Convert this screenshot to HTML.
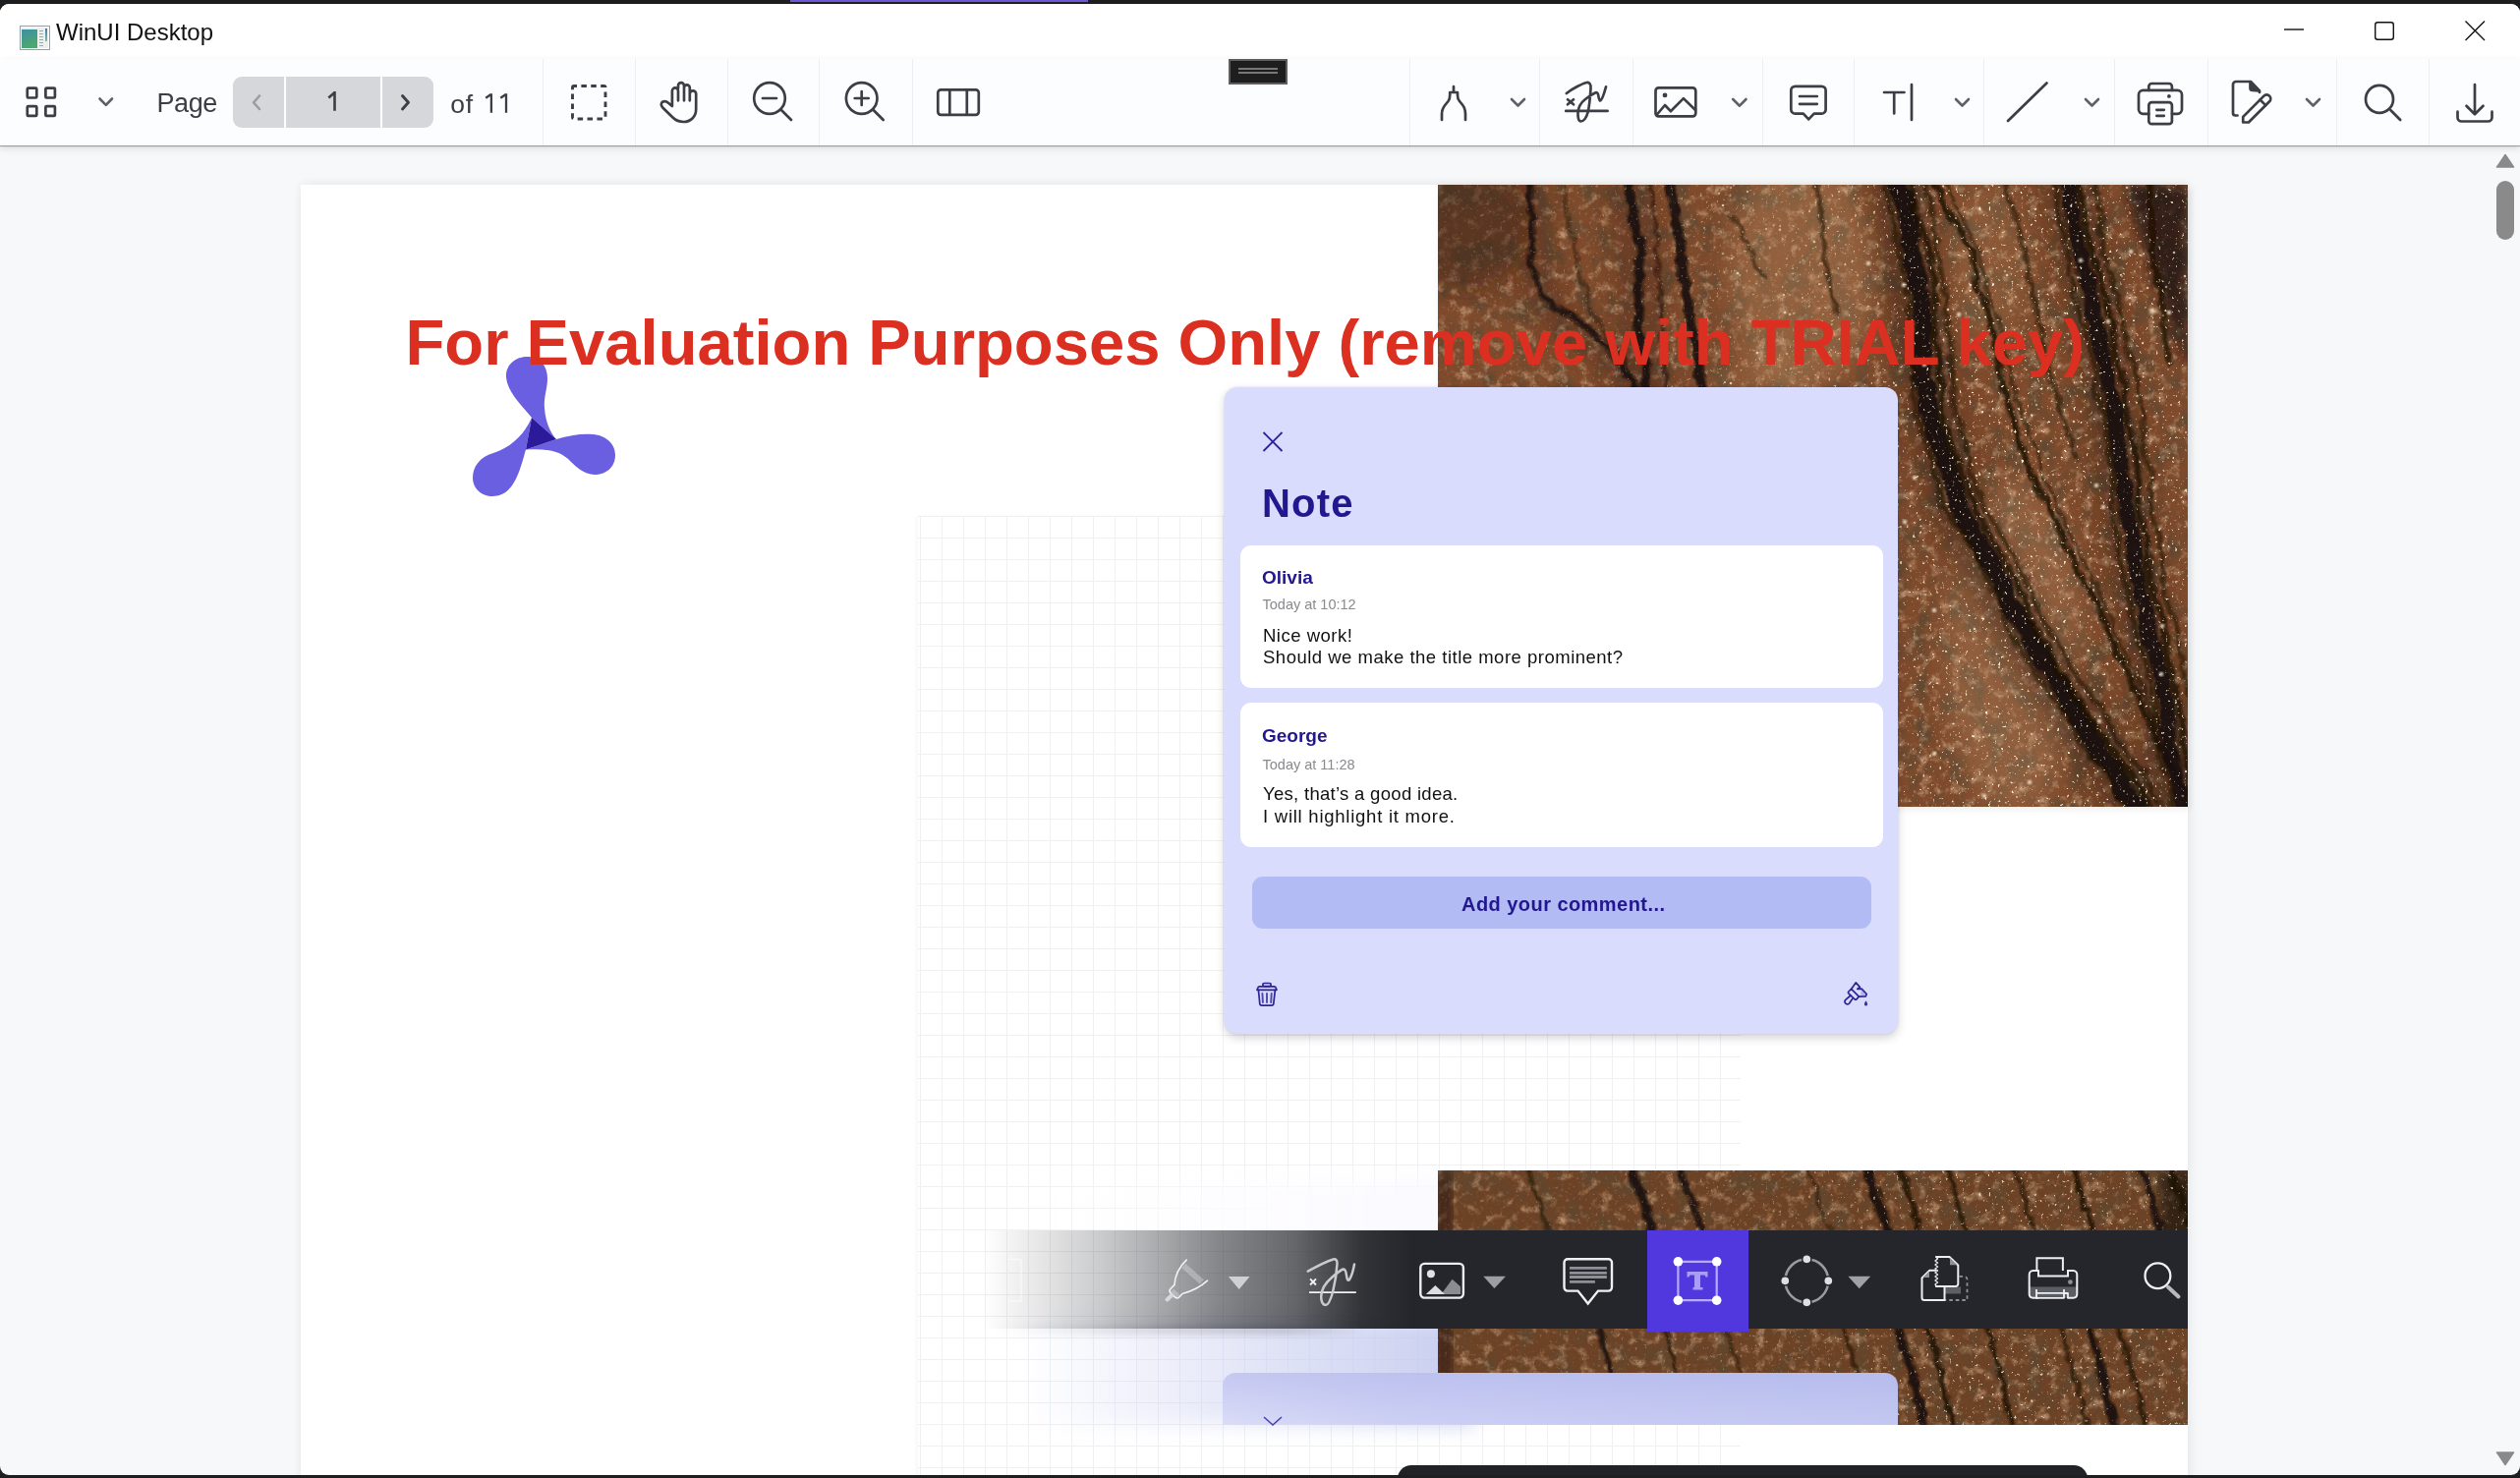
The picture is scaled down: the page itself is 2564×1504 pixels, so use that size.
<!DOCTYPE html>
<html><head><meta charset="utf-8">
<style>
*{box-sizing:border-box;margin:0;padding:0}
html,body{width:2564px;height:1504px;overflow:hidden;background:#1d1e20;font-family:"Liberation Sans",sans-serif;position:relative}
.a{position:absolute}
.t{position:absolute;white-space:nowrap;line-height:1}
#win{position:absolute;left:0;top:4px;width:2564px;height:1497px;border-radius:9px;background:#f7f8fa;overflow:hidden}
#clip{position:absolute;left:0;top:0;width:2564px;height:1501px;overflow:hidden;border-radius:0 0 9px 9px}
#title{position:absolute;left:0;top:4px;width:2564px;height:56px;background:#fff;border-radius:9px 9px 0 0}
#tb{position:absolute;left:0;top:60px;width:2564px;height:88px;background:#fcfdfe;box-shadow:0 1px 1px rgba(0,0,0,.3),0 3px 7px rgba(0,0,0,.12);z-index:5}
.sep{position:absolute;top:0;width:1px;height:88px;background:#eceef1}
svg.ic{position:absolute;overflow:visible}
#page{position:absolute;left:306px;top:188px;width:1920px;height:1400px;background:#fff;box-shadow:0 0 10px rgba(0,0,0,.05),3px 0 14px rgba(0,0,0,.04)}

.rock{background-color:#7a4e33;background-image:linear-gradient(100deg,rgba(30,15,8,.0) 0%,rgba(30,15,8,.35) 20%,rgba(30,15,8,0) 30%,rgba(30,15,8,.4) 45%,rgba(30,15,8,0) 55%,rgba(30,15,8,.45) 75%,rgba(30,15,8,0) 85%,rgba(30,15,8,.5) 97%)}
</style></head>
<body>
<div id="win"></div>
<div class="a" style="left:804px;top:0;width:303px;height:2px;background:#6b59d6"></div>
<div id="clip">
  <div id="page"></div>
  <!-- grid -->
  <div class="a" style="left:934px;top:525px;width:837px;height:980px;background-color:#fff;background-image:linear-gradient(90deg,#eef0f3 1.5px,transparent 1.5px),linear-gradient(#eef0f3 1.5px,transparent 1.5px);background-size:22px 22px;background-position:24px 22px;box-shadow:-2px 0 3px rgba(0,0,0,.03)"></div>
  <!-- image 1 -->
  <svg class="ic" style="left:1463px;top:188px;overflow:hidden;box-shadow:2px 2px 8px rgba(0,0,0,.08)" width="763" height="633" viewBox="0 0 763 633"><defs>
<filter id="tex" x="0" y="0" width="100%" height="100%"><feTurbulence type="fractalNoise" baseFrequency="0.05 0.035" numOctaves="4" seed="5"/><feColorMatrix type="matrix" values="0 0 0 0 0.14  0 0 0 0 0.08  0 0 0 0 0.04  3.2 0 0 0 -1.45"/></filter>
<filter id="tex2" x="0" y="0" width="100%" height="100%"><feTurbulence type="fractalNoise" baseFrequency="0.09" numOctaves="3" seed="11"/><feColorMatrix type="matrix" values="0 0 0 0 0.80  0 0 0 0 0.50  0 0 0 0 0.30  2.3 0 0 0 -1.2"/></filter>
<filter id="tex3" x="0" y="0" width="100%" height="100%"><feTurbulence type="fractalNoise" baseFrequency="0.35" numOctaves="2" seed="2"/><feColorMatrix type="matrix" values="0 0 0 0 0.18  0 0 0 0 0.09  0 0 0 0 0.03  2.2 0 0 0 -1.0"/></filter>
<filter id="rough" x="-5%" y="-5%" width="110%" height="110%"><feTurbulence type="fractalNoise" baseFrequency="0.08" numOctaves="2" seed="4" result="t"/><feDisplacementMap in="SourceGraphic" in2="t" scale="9" xChannelSelector="R" yChannelSelector="G"/></filter>
<filter id="spk" x="0" y="0" width="100%" height="100%"><feTurbulence type="fractalNoise" baseFrequency="0.3" numOctaves="2" seed="9"/><feColorMatrix type="matrix" values="0 0 0 0 0.97  0 0 0 0 0.88  0 0 0 0 0.66  8 0 0 0 -5.4"/><feGaussianBlur stdDeviation="0.5"/></filter>
<linearGradient id="spkg" x1="0" y1="0" x2="1" y2="0"><stop offset="0" stop-color="#fff" stop-opacity=".15"/><stop offset=".45" stop-color="#fff" stop-opacity=".5"/><stop offset=".7" stop-color="#fff" stop-opacity="1"/><stop offset="1" stop-color="#fff" stop-opacity=".8"/></linearGradient>
<mask id="spkm"><rect width="800" height="700" fill="url(#spkg)"/></mask>
<filter id="b1" x="-20%" y="-5%" width="140%" height="110%"><feGaussianBlur stdDeviation="1"/></filter>
<filter id="b4"><feGaussianBlur stdDeviation="6"/></filter>
<filter id="b8"><feGaussianBlur stdDeviation="12"/></filter>
<linearGradient id="sh1" x1="0" y1="0" x2="1" y2="0"><stop offset="0" stop-color="#000" stop-opacity=".08"/><stop offset=".6" stop-color="#fff" stop-opacity=".04"/><stop offset="1" stop-color="#000" stop-opacity=".15"/></linearGradient>
</defs><rect width="763" height="633" fill="#8e5232"/><rect width="763" height="633" filter="url(#tex)"/><rect width="763" height="633" filter="url(#tex2)"/><rect width="763" height="633" filter="url(#tex3)"/><rect width="763" height="633" fill="#3a1e0c" opacity=".14"/><g filter="url(#b8)"><ellipse cx="370" cy="90" rx="75" ry="120" fill="#c89a70" opacity=".28"/><ellipse cx="330" cy="230" rx="50" ry="60" fill="#c89a70" opacity=".18"/><ellipse cx="585" cy="470" rx="70" ry="170" fill="#d0a880" opacity=".22"/><ellipse cx="560" cy="80" rx="40" ry="80" fill="#c89a70" opacity=".18"/></g><g filter="url(#b8)" opacity=".55"><path d="M95 0 C97.5 19.7 94.3 86.5 110 118 C125.7 149.5 165.7 160.3 189 189 C212.3 217.7 239.8 273.2 250 290" stroke="#3a2216" stroke-width="30.0" stroke-opacity="0.6" fill="none" stroke-linecap="round"/><path d="M194 0 C195.8 15.7 201.8 59.8 205 94 C208.2 128.2 205.5 167.3 213 205 C220.5 242.7 243.8 300.8 250 320" stroke="#3a2216" stroke-width="40.0" stroke-opacity="0.6" fill="none" stroke-linecap="round"/><path d="M468 0 C472.3 28.8 483.7 118.0 494 173 C504.3 228.0 511.5 280.5 530 330 C548.5 379.5 574.7 419.5 605 470 C635.3 520.5 694.2 605.8 712 633" stroke="#2a180e" stroke-width="50.0" stroke-opacity="0.8" fill="none" stroke-linecap="round"/><path d="M640 0 C646.2 28.8 664.8 103.7 677 173 C689.2 242.3 699.7 339.3 713 416 C726.3 492.7 749.7 596.8 757 633" stroke="#2a180e" stroke-width="45.0" stroke-opacity="0.8" fill="none" stroke-linecap="round"/></g><g filter="url(#rough)"><ellipse cx="30" cy="40" rx="60" ry="70" fill="#3a2418" opacity=".5" filter="url(#b8)"/><path d="M700 0 L763 0 L763 190 C745 140 720 80 700 0 Z" fill="#1a0f0a" opacity=".75" filter="url(#b4)"/><path d="M94.3 0.0 C94.2 3.5 93.6 14.0 93.9 21.0 C94.2 28.0 96.2 35.0 96.3 42.0 C96.4 49.0 94.4 58.6 94.3 63.0 C94.2 67.4 95.7 66.5 95.8 68.3 C95.9 70.1 95.2 71.9 94.8 73.7 C94.4 75.5 92.3 76.0 93.2 79.0 C94.1 82.0 98.3 87.7 100.0 92.0 C101.7 96.3 101.5 100.7 103.1 105.0 C104.7 109.3 107.1 114.8 109.7 118.0 C112.3 121.2 115.6 122.2 118.9 124.3 C122.2 126.4 125.9 128.6 129.7 130.7 C133.5 132.8 138.1 134.8 141.7 137.0 C145.2 139.2 148.7 141.5 151.0 143.7 C153.3 145.9 153.7 148.1 155.8 150.3 C158.0 152.5 161.0 154.1 163.9 157.0 C166.8 159.9 170.3 164.1 173.5 167.7 C176.7 171.2 180.2 174.8 182.8 178.3 C185.4 181.9 187.6 186.3 189.3 189.0 C191.0 191.7 191.2 192.5 192.9 194.3 C194.6 196.1 198.4 197.9 199.6 199.7 C200.8 201.5 198.3 202.2 200.2 205.0 C202.1 207.8 208.4 212.8 211.1 216.7 C213.8 220.6 214.4 224.4 216.5 228.3 C218.6 232.2 221.0 235.3 223.6 240.0 C226.2 244.7 228.9 251.1 231.8 256.7 C234.7 262.2 237.9 267.8 240.9 273.3 C243.9 278.9 248.5 287.2 250 290" stroke="#1a0e08" stroke-width="6.4" stroke-opacity="0.85" fill="none" stroke-linecap="round" filter="url(#b1)"/><path d="M127.3 0.0 C127.8 4.4 128.5 17.5 130.1 26.3 C131.7 35.1 134.9 43.9 137.0 52.7 C139.1 61.5 141.0 72.0 142.6 79.0 C144.2 86.0 144.9 89.5 146.5 94.7 C148.1 99.9 150.7 105.1 152.2 110.3 C153.7 115.5 153.2 120.7 155.3 126.0 C157.4 131.3 161.4 136.9 164.6 142.3 C167.8 147.8 171.0 153.2 174.5 158.7 C178.0 164.1 182.3 169.2 185.7 175.0 C189.1 180.8 191.6 187.2 194.7 193.3 C197.8 199.4 200.9 205.6 204.3 211.7 C207.7 217.8 213.2 226.9 215 230" stroke="#1a0e08" stroke-width="3.2" stroke-opacity="0.5" fill="none" stroke-linecap="round" filter="url(#b1)"/><path d="M194.3 0.0 C194.8 3.5 196.5 14.0 197.5 21.0 C198.5 28.0 199.1 35.0 200.5 42.0 C201.9 49.0 205.3 57.8 206.2 63.0 C207.1 68.2 206.2 69.8 205.8 73.3 C205.4 76.8 204.1 80.2 204.0 83.7 C203.9 87.2 205.2 89.6 205.3 94.0 C205.4 98.4 204.4 104.7 204.4 110.0 C204.4 115.3 205.3 120.7 205.2 126.0 C205.1 131.3 203.8 135.8 203.9 142.0 C204.0 148.2 204.2 156.0 205.5 163.0 C206.8 170.0 210.6 177.0 211.6 184.0 C212.6 191.0 210.4 198.4 211.5 205.0 C212.6 211.6 216.0 217.2 218.3 223.3 C220.6 229.4 223.7 235.6 225.4 241.7 C227.1 247.8 226.7 253.6 228.6 260.0 C230.5 266.4 234.4 273.3 236.6 280.0 C238.8 286.7 239.3 293.3 241.5 300.0 C243.7 306.7 248.6 316.7 250 320" stroke="#1a0e08" stroke-width="9.6" stroke-opacity="0.9" fill="none" stroke-linecap="round" filter="url(#b1)"/><path d="M236.7 0.0 C237.3 3.5 239.3 14.0 240.4 21.0 C241.5 28.0 241.8 35.0 243.0 42.0 C244.2 49.0 246.8 56.9 247.5 63.0 C248.2 69.1 246.8 73.5 247.3 78.7 C247.9 83.9 250.0 89.1 250.8 94.3 C251.7 99.5 251.7 104.8 252.4 110.0 C253.1 115.2 254.2 120.5 255.0 125.7 C255.8 130.9 256.1 136.1 257.2 141.3 C258.3 146.5 260.2 151.7 261.4 157.0 C262.6 162.3 263.8 167.7 264.4 173.0 C265.0 178.3 264.5 183.7 265.2 189.0 C265.9 194.3 267.6 199.3 268.7 205.0 C269.8 210.7 270.0 217.2 271.9 223.3 C273.8 229.4 277.8 235.6 280.1 241.7 C282.4 247.8 283.6 253.6 285.6 260.0 C287.6 266.4 290.2 273.3 292.0 280.0 C293.8 286.7 295.0 293.3 296.3 300.0 C297.6 306.7 299.4 316.7 300 320" stroke="#1a0e08" stroke-width="9.6" stroke-opacity="0.9" fill="none" stroke-linecap="round" filter="url(#b1)"/><path d="M216.1 0.0 C216.6 4.4 218.0 17.5 219.2 26.3 C220.3 35.1 222.3 43.9 223.0 52.7 C223.7 61.5 222.3 67.6 223.1 79.0 C223.8 90.4 226.5 107.0 227.5 121.0 C228.5 135.0 228.3 149.0 229.0 163.0 C229.7 177.0 230.5 193.8 231.5 205.0 C232.5 216.2 233.4 221.7 235.2 230.0 C237.0 238.3 240.5 246.7 242.1 255.0 C243.7 263.3 244.5 275.8 245 280" stroke="#1a0e08" stroke-width="4.8" stroke-opacity="0.45" fill="none" stroke-linecap="round" filter="url(#b1)"/><path d="M298.5 31.0 C299.4 32.6 302.1 37.5 304.0 40.7 C305.9 43.9 307.5 47.1 309.6 50.3 C311.7 53.5 315.1 56.5 316.5 60.0 C317.9 63.5 316.9 67.5 318.3 71.3 C319.7 75.1 322.9 78.9 324.8 82.7 C326.8 86.5 329.1 92.1 330 94" stroke="#1a0e08" stroke-width="4.8" stroke-opacity="0.5" fill="none" stroke-linecap="round" filter="url(#b1)"/><path d="M385.2 0.0 C385.8 3.3 387.9 13.3 388.9 20.0 C389.8 26.7 390.1 33.3 390.9 40.0 C391.7 46.7 392.8 52.8 393.5 60.0 C394.2 67.2 394.3 75.5 395.4 83.3 C396.5 91.1 398.7 98.9 400.3 106.7 C401.9 114.5 404.2 126.1 405 130" stroke="#1a0e08" stroke-width="4.8" stroke-opacity="0.6" fill="none" stroke-linecap="round" filter="url(#b1)"/><path d="M467.2 0.0 C468.5 3.5 472.9 14.0 475.0 21.0 C477.1 28.0 479.3 35.0 480.1 42.0 C480.9 49.0 479.3 56.9 479.9 63.0 C480.4 69.1 482.2 73.5 483.4 78.7 C484.6 83.9 485.9 89.1 487.1 94.3 C488.3 99.5 489.5 103.9 490.4 110.0 C491.3 116.1 492.0 124.0 492.6 131.0 C493.2 138.0 493.9 145.0 493.9 152.0 C493.9 159.0 492.8 166.2 492.6 173.0 C492.5 179.8 492.2 186.1 493.0 192.7 C493.8 199.2 496.5 205.8 497.5 212.3 C498.5 218.9 497.1 223.3 499.2 232.0 C501.3 240.7 506.5 253.8 510.4 264.7 C514.3 275.6 519.2 286.4 522.7 297.3 C526.2 308.2 527.7 320.7 531.1 330.0 C534.5 339.3 539.0 345.5 543.4 353.3 C547.8 361.1 552.8 368.9 557.4 376.7 C562.0 384.5 567.5 392.2 571.1 400.0 C574.7 407.8 574.9 415.5 579.0 423.3 C583.1 431.1 591.1 438.9 595.7 446.7 C600.3 454.5 602.3 462.2 606.7 470.0 C611.1 477.8 617.2 485.5 622.2 493.3 C627.2 501.1 632.3 508.9 636.8 516.7 C641.3 524.5 645.1 532.8 649.4 540.0 C653.7 547.2 658.6 553.3 662.7 560.0 C666.9 566.7 669.6 573.3 674.3 580.0 C679.0 586.7 687.4 594.8 690.8 600.0 C694.2 605.2 692.8 607.3 694.7 611.0 C696.6 614.7 699.2 618.3 702.1 622.0 C705.0 625.7 710.4 631.2 712 633" stroke="#1a0e08" stroke-width="19.2" stroke-opacity="0.92" fill="none" stroke-linecap="round" filter="url(#b1)"/><path d="M454.3 0.0 C455.0 3.5 456.9 14.0 458.6 21.0 C460.3 28.0 462.9 35.0 464.4 42.0 C465.8 49.0 466.3 56.9 467.3 63.0 C468.3 69.1 469.1 73.5 470.3 78.7 C471.5 83.9 473.4 89.1 474.6 94.3 C475.8 99.5 476.7 103.9 477.6 110.0 C478.5 116.1 479.7 124.0 479.8 131.0 C479.9 138.0 477.8 145.0 478.5 152.0 C479.2 159.0 483.2 166.2 484.2 173.0 C485.2 179.8 484.8 186.1 484.7 192.7 C484.6 199.2 483.6 205.8 483.9 212.3 C484.2 218.9 484.3 223.3 486.5 232.0 C488.7 240.7 493.7 253.8 497.1 264.7 C500.6 275.6 504.1 286.4 507.2 297.3 C510.3 308.2 511.3 320.7 515.7 330.0 C520.1 339.3 528.1 345.5 533.4 353.3 C538.7 361.1 543.5 368.9 547.6 376.7 C551.7 384.5 554.1 392.2 557.8 400.0 C561.5 407.8 566.1 415.5 569.6 423.3 C573.1 431.1 575.3 438.9 578.8 446.7 C582.3 454.5 585.9 462.2 590.6 470.0 C595.3 477.8 601.9 485.5 607.1 493.3 C612.3 501.1 616.1 508.9 621.6 516.7 C627.1 524.5 635.4 532.8 640.0 540.0 C644.6 547.2 645.7 553.3 649.3 560.0 C652.9 566.7 656.6 573.3 661.8 580.0 C667.0 586.7 676.8 594.8 680.7 600.0 C684.7 605.2 683.9 607.3 685.5 611.0 C687.1 614.7 688.1 618.3 690.5 622.0 C692.9 625.7 698.4 631.2 700 633" stroke="#1a0e08" stroke-width="4.8" stroke-opacity="0.6" fill="none" stroke-linecap="round" filter="url(#b1)"/><path d="M482.3 0.0 C482.6 3.5 482.3 14.0 483.8 21.0 C485.3 28.0 489.0 35.0 491.5 42.0 C494.0 49.0 497.2 56.9 498.9 63.0 C500.6 69.1 500.7 73.5 501.5 78.7 C502.3 83.9 503.3 89.1 503.8 94.3 C504.3 99.5 504.2 103.9 504.6 110.0 C505.0 116.1 505.8 124.0 505.9 131.0 C506.0 138.0 504.7 145.0 505.3 152.0 C505.9 159.0 508.8 166.2 509.6 173.0 C510.4 179.8 509.5 186.1 510.2 192.7 C510.9 199.2 513.2 205.8 513.7 212.3 C514.2 218.9 511.6 223.3 513.0 232.0 C514.4 240.7 518.5 253.8 522.3 264.7 C526.1 275.6 531.8 286.4 535.9 297.3 C540.0 308.2 543.0 320.7 546.9 330.0 C550.8 339.3 555.1 345.5 559.4 353.3 C563.7 361.1 568.1 368.9 572.5 376.7 C576.9 384.5 581.8 392.2 585.9 400.0 C590.0 407.8 593.8 415.5 597.1 423.3 C600.4 431.1 602.0 438.9 605.7 446.7 C609.4 454.5 614.5 462.2 619.1 470.0 C623.7 477.8 628.6 485.5 633.1 493.3 C637.6 501.1 641.5 508.9 646.2 516.7 C650.9 524.5 656.2 532.8 661.2 540.0 C666.2 547.2 671.3 553.3 676.0 560.0 C680.7 566.7 684.3 573.3 689.2 580.0 C694.1 586.7 701.1 594.8 705.2 600.0 C709.4 605.2 711.9 607.3 714.1 611.0 C716.3 614.7 716.4 618.3 718.4 622.0 C720.4 625.7 724.7 631.2 726 633" stroke="#1a0e08" stroke-width="6.4" stroke-opacity="0.75" fill="none" stroke-linecap="round" filter="url(#b1)"/><path d="M496.6 0.0 C497.4 3.5 500.0 14.0 501.6 21.0 C503.2 28.0 505.2 35.0 506.1 42.0 C507.0 49.0 506.6 56.9 507.2 63.0 C507.8 69.1 508.7 73.5 509.7 78.7 C510.7 83.9 511.9 89.1 513.0 94.3 C514.1 99.5 515.6 103.9 516.2 110.0 C516.9 116.1 516.2 124.0 516.9 131.0 C517.5 138.0 519.2 145.0 520.1 152.0 C521.0 159.0 521.8 166.2 522.4 173.0 C523.0 179.8 523.8 186.1 524.0 192.7 C524.2 199.2 523.4 205.8 523.9 212.3 C524.4 218.9 524.6 223.3 526.9 232.0 C529.2 240.7 535.0 253.8 537.8 264.7 C540.6 275.6 540.3 286.4 543.5 297.3 C546.7 308.2 552.3 320.7 557.0 330.0 C561.7 339.3 567.2 345.5 571.8 353.3 C576.4 361.1 580.1 368.9 584.4 376.7 C588.7 384.5 593.6 392.2 597.5 400.0 C601.4 407.8 604.2 415.5 607.5 423.3 C610.8 431.1 613.2 438.9 617.4 446.7 C621.6 454.5 628.1 462.2 632.7 470.0 C637.3 477.8 640.0 485.5 645.0 493.3 C650.0 501.1 657.2 508.9 662.8 516.7 C668.4 524.5 674.5 532.8 678.8 540.0 C683.1 547.2 684.8 553.3 688.7 560.0 C692.6 566.7 697.1 573.3 702.1 580.0 C707.1 586.7 714.9 594.8 718.7 600.0 C722.5 605.2 723.0 607.3 724.7 611.0 C726.4 614.7 726.5 618.3 728.7 622.0 C730.9 625.7 736.5 631.2 738 633" stroke="#1a0e08" stroke-width="4.8" stroke-opacity="0.6" fill="none" stroke-linecap="round" filter="url(#b1)"/><path d="M506.8 0.0 C508.8 4.3 513.9 17.3 518.6 26.0 C523.3 34.7 530.3 43.3 534.8 52.0 C539.3 60.7 543.7 70.2 545.8 78.0 C547.9 85.8 545.4 92.0 547.2 99.0 C549.0 106.0 554.0 113.0 556.6 120.0 C559.2 127.0 560.9 132.4 562.9 141.0 C564.9 149.6 566.7 161.2 568.6 171.3 C570.5 181.4 572.0 191.6 574.4 201.7 C576.8 211.8 580.2 221.5 583.3 232.0 C586.4 242.5 589.5 253.8 593.1 264.7 C596.7 275.6 599.8 286.4 604.8 297.3 C609.8 308.2 617.3 319.0 622.8 330.0 C628.3 341.0 632.5 352.2 637.6 363.3 C642.7 374.4 647.7 385.6 653.5 396.7 C659.3 407.8 667.1 418.3 672.6 430.0 C678.1 441.7 680.8 454.5 686.3 466.7 C691.8 478.9 699.6 491.1 705.6 503.3 C711.6 515.5 717.5 529.4 722.0 540.0 C726.5 550.6 728.4 557.8 732.6 566.7 C736.8 575.6 742.1 584.4 747.2 593.3 C752.3 602.2 760.4 615.5 763 620" stroke="#1a0e08" stroke-width="6.4" stroke-opacity="0.8" fill="none" stroke-linecap="round" filter="url(#b1)"/><path d="M517.8 0.0 C519.7 4.3 524.9 17.3 529.1 26.0 C533.3 34.7 539.0 43.3 542.9 52.0 C546.8 60.7 550.0 70.2 552.6 78.0 C555.2 85.8 557.1 92.0 558.8 99.0 C560.4 106.0 560.2 113.0 562.5 120.0 C564.8 127.0 570.1 132.4 572.5 141.0 C574.9 149.6 574.7 161.2 576.8 171.3 C578.9 181.4 582.3 191.6 585.1 201.7 C587.9 211.8 589.7 221.5 593.5 232.0 C597.3 242.5 603.8 253.8 607.8 264.7 C611.8 275.6 613.1 286.4 617.2 297.3 C621.3 308.2 627.6 319.0 632.5 330.0 C637.4 341.0 641.5 352.2 646.7 363.3 C651.9 374.4 657.9 385.6 663.5 396.7 C669.1 407.8 675.1 418.3 680.1 430.0 C685.1 441.7 688.3 454.5 693.8 466.7 C699.3 478.9 707.3 491.1 713.0 503.3 C718.7 515.5 723.4 529.4 728.1 540.0 C732.8 550.6 736.0 557.8 741.4 566.7 C746.8 575.6 755.2 584.4 760.5 593.3 C765.8 602.2 770.9 615.5 773 620" stroke="#1a0e08" stroke-width="3.2" stroke-opacity="0.6" fill="none" stroke-linecap="round" filter="url(#b1)"/><path d="M577.7 0.0 C579.0 4.3 583.0 17.3 585.6 26.0 C588.2 34.7 590.9 43.3 593.2 52.0 C595.5 60.7 597.7 70.6 599.2 78.0 C600.7 85.4 600.8 90.2 602.0 96.3 C603.2 102.4 605.0 108.6 606.4 114.7 C607.8 120.8 608.6 126.2 610.2 133.0 C611.8 139.8 614.7 147.9 616.1 155.3 C617.5 162.8 616.9 170.2 618.4 177.7 C619.9 185.1 622.9 191.8 625.2 200.0 C627.5 208.2 629.7 217.8 632.3 226.7 C634.9 235.6 637.8 244.4 640.8 253.3 C643.8 262.2 648.5 275.6 650 280" stroke="#1a0e08" stroke-width="4.8" stroke-opacity="0.6" fill="none" stroke-linecap="round" filter="url(#b1)"/><path d="M641.6 0.0 C642.1 4.3 643.4 17.3 644.7 26.0 C646.1 34.7 647.9 43.3 649.7 52.0 C651.5 60.7 653.2 68.4 655.6 78.0 C658.0 87.6 661.9 99.2 664.1 109.7 C666.3 120.2 666.7 130.8 669.0 141.3 C671.3 151.9 675.8 164.4 677.7 173.0 C679.7 181.6 679.6 186.1 680.7 192.7 C681.8 199.2 683.0 205.8 684.4 212.3 C685.8 218.9 688.0 223.3 689.2 232.0 C690.4 240.7 690.5 253.8 691.7 264.7 C692.9 275.6 694.8 286.4 696.2 297.3 C697.6 308.2 698.1 319.8 699.9 330.0 C701.7 340.2 705.3 349.1 707.0 358.7 C708.7 368.2 708.5 377.8 709.9 387.3 C711.3 396.9 713.5 408.2 715.3 416.0 C717.1 423.8 719.7 428.2 720.7 434.3 C721.8 440.4 720.3 446.6 721.6 452.7 C722.9 458.8 726.0 463.0 728.4 471.0 C730.8 479.0 734.1 490.8 736.3 500.7 C738.5 510.6 740.3 520.4 741.4 530.3 C742.5 540.2 741.9 551.0 742.8 560.0 C743.7 569.0 745.1 576.2 746.7 584.3 C748.4 592.4 751.0 600.6 752.7 608.7 C754.4 616.8 756.3 629.0 757 633" stroke="#1a0e08" stroke-width="16.0" stroke-opacity="0.9" fill="none" stroke-linecap="round" filter="url(#b1)"/><path d="M651.4 0.0 C652.4 4.3 655.5 17.3 657.1 26.0 C658.7 34.7 658.8 43.3 660.8 52.0 C662.8 60.7 666.2 68.4 669.0 78.0 C671.8 87.6 674.6 99.2 677.4 109.7 C680.2 120.2 683.8 130.8 685.7 141.3 C687.6 151.9 687.2 164.4 688.9 173.0 C690.6 181.6 694.3 186.1 696.0 192.7 C697.7 199.2 698.6 205.8 699.3 212.3 C699.9 218.9 698.4 223.3 699.9 232.0 C701.4 240.7 706.1 253.8 708.3 264.7 C710.4 275.6 712.1 286.4 712.8 297.3 C713.5 308.2 710.9 319.8 712.3 330.0 C713.7 340.2 719.4 349.1 721.0 358.7 C722.6 368.2 721.1 377.8 722.1 387.3 C723.1 396.9 724.8 408.2 726.9 416.0 C729.0 423.8 732.9 428.2 734.9 434.3 C736.9 440.4 738.1 446.6 739.0 452.7 C739.9 458.8 738.6 463.0 740.0 471.0 C741.4 479.0 745.1 490.8 747.3 500.7 C749.5 510.6 751.6 520.4 753.4 530.3 C755.2 540.2 756.7 551.0 758.0 560.0 C759.3 569.0 759.9 576.2 761.2 584.3 C762.5 592.4 764.3 600.6 765.9 608.7 C767.5 616.8 770.1 629.0 771 633" stroke="#1a0e08" stroke-width="6.4" stroke-opacity="0.75" fill="none" stroke-linecap="round" filter="url(#b1)"/><path d="M629.3 0.0 C629.4 4.3 628.4 17.3 629.8 26.0 C631.2 34.7 635.7 43.3 637.7 52.0 C639.7 60.7 640.1 68.4 641.6 78.0 C643.1 87.6 644.3 99.2 646.8 109.7 C649.2 120.2 653.1 130.8 656.3 141.3 C659.4 151.9 663.6 164.4 665.7 173.0 C667.8 181.6 668.0 186.1 668.7 192.7 C669.4 199.2 668.0 205.8 669.7 212.3 C671.4 218.9 676.9 223.3 678.9 232.0 C680.9 240.7 680.4 253.8 681.7 264.7 C683.0 275.6 686.1 286.4 686.8 297.3 C687.4 308.2 684.9 319.8 685.6 330.0 C686.3 340.2 689.5 349.1 690.9 358.7 C692.3 368.2 691.9 377.8 693.9 387.3 C695.9 396.9 700.9 408.2 702.7 416.0 C704.5 423.8 703.6 428.2 704.6 434.3 C705.6 440.4 707.0 446.6 708.8 452.7 C710.6 458.8 713.0 463.0 715.5 471.0 C718.0 479.0 721.8 490.8 724.1 500.7 C726.4 510.6 728.0 520.4 729.2 530.3 C730.5 540.2 730.7 551.0 731.6 560.0 C732.5 569.0 732.9 576.2 734.9 584.3 C736.9 592.4 741.8 600.6 743.5 608.7 C745.2 616.8 744.8 629.0 745 633" stroke="#1a0e08" stroke-width="4.8" stroke-opacity="0.6" fill="none" stroke-linecap="round" filter="url(#b1)"/><path d="M668.4 0.0 C669.3 4.3 672.8 17.3 673.9 26.0 C675.0 34.7 674.0 43.3 674.9 52.0 C675.8 60.7 676.6 68.4 679.3 78.0 C681.9 87.6 687.9 99.2 690.8 109.7 C693.7 120.2 695.0 130.8 696.9 141.3 C698.8 151.9 700.0 164.4 702.4 173.0 C704.8 181.6 709.5 186.1 711.3 192.7 C713.1 199.2 712.0 205.8 713.1 212.3 C714.2 218.9 717.1 223.3 717.8 232.0 C718.5 240.7 716.1 253.8 717.5 264.7 C718.9 275.6 724.8 286.4 726.1 297.3 C727.4 308.2 724.0 319.8 725.4 330.0 C726.8 340.2 732.7 349.1 734.5 358.7 C736.3 368.2 735.5 377.8 736.4 387.3 C737.3 396.9 738.4 408.2 740.0 416.0 C741.6 423.8 744.0 428.2 746.3 434.3 C748.6 440.4 752.2 446.6 753.6 452.7 C755.0 458.8 753.6 463.0 754.6 471.0 C755.6 479.0 757.2 490.8 759.4 500.7 C761.5 510.6 765.5 520.4 767.5 530.3 C769.5 540.2 770.2 551.0 771.4 560.0 C772.6 569.0 773.4 576.2 774.7 584.3 C776.0 592.4 777.3 600.6 779.0 608.7 C780.7 616.8 784.0 629.0 785 633" stroke="#1a0e08" stroke-width="4.8" stroke-opacity="0.6" fill="none" stroke-linecap="round" filter="url(#b1)"/><path d="M723.2 0.0 C723.6 4.5 724.8 17.8 725.5 26.7 C726.2 35.6 727.0 44.4 727.6 53.3 C728.2 62.2 727.8 70.0 729.2 80.0 C730.6 90.0 734.3 102.2 736.0 113.3 C737.7 124.4 737.7 135.6 739.2 146.7 C740.7 157.8 744.0 174.4 745 180" stroke="#1a0e08" stroke-width="6.4" stroke-opacity="0.7" fill="none" stroke-linecap="round" filter="url(#b1)"/></g><rect width="763" height="633" filter="url(#spk)" mask="url(#spkm)"/><circle cx="522" cy="113" r="0.7" fill="#f2dfc2" opacity="0.79"/><circle cx="760" cy="23" r="0.5" fill="#f2dfc2" opacity="0.75"/><circle cx="546" cy="120" r="0.8" fill="#f2dfc2" opacity="0.49"/><circle cx="496" cy="417" r="1.0" fill="#f2dfc2" opacity="0.59"/><circle cx="519" cy="528" r="0.8" fill="#f2dfc2" opacity="0.88"/><circle cx="429" cy="136" r="0.6" fill="#f2dfc2" opacity="0.54"/><circle cx="682" cy="447" r="1.0" fill="#f2dfc2" opacity="0.43"/><circle cx="758" cy="622" r="1.3" fill="#f2dfc2" opacity="0.42"/><circle cx="314" cy="469" r="0.7" fill="#f2dfc2" opacity="0.59"/><circle cx="307" cy="421" r="0.8" fill="#f2dfc2" opacity="0.83"/><circle cx="604" cy="178" r="0.6" fill="#f2dfc2" opacity="0.73"/><circle cx="302" cy="117" r="0.7" fill="#f2dfc2" opacity="0.60"/><circle cx="407" cy="609" r="0.9" fill="#f2dfc2" opacity="0.53"/><circle cx="297" cy="559" r="0.6" fill="#f2dfc2" opacity="0.55"/><circle cx="281" cy="242" r="0.8" fill="#f2dfc2" opacity="0.50"/><circle cx="597" cy="157" r="1.3" fill="#f2dfc2" opacity="0.35"/><circle cx="408" cy="57" r="0.8" fill="#f2dfc2" opacity="0.67"/><circle cx="470" cy="190" r="1.0" fill="#f2dfc2" opacity="0.48"/><circle cx="563" cy="335" r="1.3" fill="#f2dfc2" opacity="0.44"/><circle cx="711" cy="496" r="0.9" fill="#f2dfc2" opacity="0.56"/><circle cx="438" cy="623" r="0.6" fill="#f2dfc2" opacity="0.51"/><circle cx="579" cy="92" r="1.3" fill="#f2dfc2" opacity="0.81"/><circle cx="711" cy="397" r="1.0" fill="#f2dfc2" opacity="0.74"/><circle cx="524" cy="576" r="1.3" fill="#f2dfc2" opacity="0.63"/><circle cx="683" cy="509" r="1.3" fill="#f2dfc2" opacity="0.73"/><circle cx="665" cy="450" r="1.0" fill="#f2dfc2" opacity="0.70"/><circle cx="321" cy="26" r="1.0" fill="#f2dfc2" opacity="0.55"/><circle cx="331" cy="529" r="0.9" fill="#f2dfc2" opacity="0.38"/><circle cx="289" cy="336" r="0.6" fill="#f2dfc2" opacity="0.62"/><circle cx="282" cy="505" r="1.0" fill="#f2dfc2" opacity="0.86"/><circle cx="714" cy="58" r="0.9" fill="#f2dfc2" opacity="0.39"/><circle cx="636" cy="160" r="0.5" fill="#f2dfc2" opacity="0.82"/><circle cx="393" cy="479" r="0.6" fill="#f2dfc2" opacity="0.76"/><circle cx="751" cy="313" r="0.8" fill="#f2dfc2" opacity="0.39"/><circle cx="720" cy="182" r="0.5" fill="#f2dfc2" opacity="0.69"/><circle cx="590" cy="49" r="0.6" fill="#f2dfc2" opacity="0.53"/><circle cx="595" cy="439" r="0.9" fill="#f2dfc2" opacity="0.66"/><circle cx="286" cy="38" r="0.7" fill="#f2dfc2" opacity="0.88"/><circle cx="328" cy="138" r="0.8" fill="#f2dfc2" opacity="0.51"/><circle cx="529" cy="294" r="0.8" fill="#f2dfc2" opacity="0.77"/><circle cx="760" cy="348" r="0.7" fill="#f2dfc2" opacity="0.89"/><circle cx="732" cy="11" r="0.8" fill="#f2dfc2" opacity="0.39"/><circle cx="525" cy="630" r="0.7" fill="#f2dfc2" opacity="0.56"/><circle cx="723" cy="589" r="0.5" fill="#f2dfc2" opacity="0.67"/><circle cx="348" cy="332" r="0.7" fill="#f2dfc2" opacity="0.42"/><circle cx="676" cy="322" r="0.5" fill="#f2dfc2" opacity="0.74"/><circle cx="392" cy="568" r="0.8" fill="#f2dfc2" opacity="0.57"/><circle cx="357" cy="601" r="1.0" fill="#f2dfc2" opacity="0.60"/><circle cx="426" cy="89" r="0.7" fill="#f2dfc2" opacity="0.56"/><circle cx="338" cy="210" r="0.7" fill="#f2dfc2" opacity="0.76"/><circle cx="685" cy="76" r="0.6" fill="#f2dfc2" opacity="0.74"/><circle cx="715" cy="183" r="0.7" fill="#f2dfc2" opacity="0.39"/><circle cx="468" cy="551" r="0.5" fill="#f2dfc2" opacity="0.55"/><circle cx="487" cy="174" r="0.5" fill="#f2dfc2" opacity="0.50"/><circle cx="305" cy="419" r="1.0" fill="#f2dfc2" opacity="0.86"/><circle cx="400" cy="168" r="0.9" fill="#f2dfc2" opacity="0.52"/><circle cx="653" cy="497" r="0.8" fill="#f2dfc2" opacity="0.84"/><circle cx="672" cy="399" r="0.9" fill="#f2dfc2" opacity="0.65"/><circle cx="628" cy="31" r="1.0" fill="#f2dfc2" opacity="0.58"/><circle cx="577" cy="88" r="1.3" fill="#f2dfc2" opacity="0.51"/><circle cx="304" cy="587" r="0.6" fill="#f2dfc2" opacity="0.44"/><circle cx="480" cy="178" r="0.7" fill="#f2dfc2" opacity="0.76"/><circle cx="752" cy="165" r="1.0" fill="#f2dfc2" opacity="0.48"/><circle cx="513" cy="423" r="0.5" fill="#f2dfc2" opacity="0.44"/><circle cx="358" cy="132" r="1.3" fill="#f2dfc2" opacity="0.62"/><circle cx="386" cy="574" r="1.3" fill="#f2dfc2" opacity="0.60"/><circle cx="347" cy="122" r="0.5" fill="#f2dfc2" opacity="0.45"/><circle cx="548" cy="202" r="0.7" fill="#f2dfc2" opacity="0.49"/><circle cx="555" cy="562" r="1.0" fill="#f2dfc2" opacity="0.83"/><circle cx="465" cy="472" r="0.6" fill="#f2dfc2" opacity="0.56"/><circle cx="443" cy="39" r="0.7" fill="#f2dfc2" opacity="0.67"/><circle cx="454" cy="435" r="0.9" fill="#f2dfc2" opacity="0.70"/><circle cx="697" cy="137" r="0.7" fill="#f2dfc2" opacity="0.84"/><circle cx="466" cy="409" r="0.8" fill="#f2dfc2" opacity="0.87"/><circle cx="690" cy="553" r="0.5" fill="#f2dfc2" opacity="0.42"/><circle cx="485" cy="483" r="1.3" fill="#f2dfc2" opacity="0.61"/><circle cx="564" cy="0" r="0.8" fill="#f2dfc2" opacity="0.86"/><circle cx="728" cy="334" r="0.8" fill="#f2dfc2" opacity="0.88"/><circle cx="400" cy="69" r="0.6" fill="#f2dfc2" opacity="0.43"/><circle cx="749" cy="69" r="1.3" fill="#f2dfc2" opacity="0.75"/><circle cx="593" cy="484" r="0.8" fill="#f2dfc2" opacity="0.40"/><circle cx="655" cy="1" r="0.6" fill="#f2dfc2" opacity="0.48"/><circle cx="724" cy="409" r="0.7" fill="#f2dfc2" opacity="0.88"/><circle cx="583" cy="334" r="0.8" fill="#f2dfc2" opacity="0.73"/><circle cx="334" cy="45" r="0.9" fill="#f2dfc2" opacity="0.87"/><circle cx="373" cy="165" r="1.3" fill="#f2dfc2" opacity="0.68"/><circle cx="285" cy="191" r="0.8" fill="#f2dfc2" opacity="0.50"/><circle cx="433" cy="531" r="0.6" fill="#f2dfc2" opacity="0.61"/><circle cx="393" cy="156" r="0.8" fill="#f2dfc2" opacity="0.74"/><circle cx="428" cy="14" r="0.8" fill="#f2dfc2" opacity="0.84"/><circle cx="593" cy="51" r="0.6" fill="#f2dfc2" opacity="0.72"/><circle cx="727" cy="144" r="0.5" fill="#f2dfc2" opacity="0.73"/><circle cx="627" cy="229" r="0.8" fill="#f2dfc2" opacity="0.46"/><circle cx="665" cy="468" r="0.9" fill="#f2dfc2" opacity="0.39"/><circle cx="519" cy="127" r="1.3" fill="#f2dfc2" opacity="0.80"/><circle cx="391" cy="140" r="1.3" fill="#f2dfc2" opacity="0.84"/><circle cx="333" cy="395" r="0.9" fill="#f2dfc2" opacity="0.45"/><circle cx="388" cy="264" r="1.0" fill="#f2dfc2" opacity="0.38"/><circle cx="567" cy="584" r="0.5" fill="#f2dfc2" opacity="0.47"/><circle cx="750" cy="90" r="0.5" fill="#f2dfc2" opacity="0.74"/><circle cx="369" cy="285" r="1.0" fill="#f2dfc2" opacity="0.84"/><circle cx="634" cy="631" r="0.6" fill="#f2dfc2" opacity="0.53"/><circle cx="370" cy="592" r="1.0" fill="#f2dfc2" opacity="0.61"/><circle cx="431" cy="459" r="1.3" fill="#f2dfc2" opacity="0.56"/><circle cx="440" cy="107" r="0.5" fill="#f2dfc2" opacity="0.39"/><circle cx="319" cy="266" r="0.5" fill="#f2dfc2" opacity="0.66"/><circle cx="647" cy="241" r="1.3" fill="#f2dfc2" opacity="0.80"/><circle cx="677" cy="274" r="0.5" fill="#f2dfc2" opacity="0.74"/><circle cx="375" cy="343" r="0.8" fill="#f2dfc2" opacity="0.46"/><circle cx="456" cy="568" r="0.5" fill="#f2dfc2" opacity="0.70"/><circle cx="400" cy="396" r="0.8" fill="#f2dfc2" opacity="0.37"/><circle cx="297" cy="40" r="0.5" fill="#f2dfc2" opacity="0.49"/><circle cx="641" cy="569" r="0.7" fill="#f2dfc2" opacity="0.55"/><circle cx="442" cy="604" r="0.5" fill="#f2dfc2" opacity="0.49"/><circle cx="626" cy="200" r="0.7" fill="#f2dfc2" opacity="0.51"/><circle cx="629" cy="377" r="1.3" fill="#f2dfc2" opacity="0.70"/><circle cx="736" cy="15" r="0.6" fill="#f2dfc2" opacity="0.41"/><circle cx="626" cy="295" r="1.3" fill="#f2dfc2" opacity="0.56"/><circle cx="401" cy="272" r="0.8" fill="#f2dfc2" opacity="0.42"/><circle cx="520" cy="6" r="1.0" fill="#f2dfc2" opacity="0.52"/><circle cx="614" cy="96" r="0.6" fill="#f2dfc2" opacity="0.53"/><circle cx="434" cy="229" r="1.3" fill="#f2dfc2" opacity="0.68"/><circle cx="527" cy="248" r="0.6" fill="#f2dfc2" opacity="0.49"/><circle cx="311" cy="21" r="0.9" fill="#f2dfc2" opacity="0.65"/><circle cx="358" cy="270" r="0.5" fill="#f2dfc2" opacity="0.89"/><circle cx="408" cy="53" r="0.5" fill="#f2dfc2" opacity="0.58"/><circle cx="757" cy="615" r="0.6" fill="#f2dfc2" opacity="0.48"/><circle cx="481" cy="393" r="1.0" fill="#f2dfc2" opacity="0.48"/><circle cx="540" cy="490" r="1.3" fill="#f2dfc2" opacity="0.42"/><circle cx="686" cy="186" r="0.9" fill="#f2dfc2" opacity="0.50"/><circle cx="403" cy="165" r="0.8" fill="#f2dfc2" opacity="0.49"/><circle cx="398" cy="97" r="0.9" fill="#f2dfc2" opacity="0.45"/><circle cx="311" cy="159" r="0.6" fill="#f2dfc2" opacity="0.63"/><circle cx="392" cy="512" r="1.0" fill="#f2dfc2" opacity="0.61"/><circle cx="298" cy="3" r="1.3" fill="#f2dfc2" opacity="0.48"/><circle cx="497" cy="237" r="0.7" fill="#f2dfc2" opacity="0.48"/><circle cx="304" cy="380" r="1.3" fill="#f2dfc2" opacity="0.67"/><circle cx="729" cy="236" r="1.3" fill="#f2dfc2" opacity="0.45"/><circle cx="571" cy="491" r="1.0" fill="#f2dfc2" opacity="0.87"/><circle cx="331" cy="377" r="0.9" fill="#f2dfc2" opacity="0.54"/><circle cx="298" cy="215" r="0.5" fill="#f2dfc2" opacity="0.46"/><circle cx="403" cy="379" r="1.0" fill="#f2dfc2" opacity="0.85"/><circle cx="674" cy="518" r="0.8" fill="#f2dfc2" opacity="0.72"/><circle cx="369" cy="198" r="0.6" fill="#f2dfc2" opacity="0.37"/><circle cx="519" cy="306" r="0.8" fill="#f2dfc2" opacity="0.41"/><circle cx="471" cy="348" r="1.0" fill="#f2dfc2" opacity="0.64"/><circle cx="595" cy="252" r="0.7" fill="#f2dfc2" opacity="0.58"/><circle cx="417" cy="195" r="0.5" fill="#f2dfc2" opacity="0.52"/><circle cx="554" cy="226" r="0.8" fill="#f2dfc2" opacity="0.36"/><circle cx="650" cy="508" r="1.0" fill="#f2dfc2" opacity="0.46"/><circle cx="632" cy="129" r="0.5" fill="#f2dfc2" opacity="0.59"/><circle cx="356" cy="72" r="0.5" fill="#f2dfc2" opacity="0.57"/><circle cx="706" cy="292" r="0.6" fill="#f2dfc2" opacity="0.42"/><circle cx="305" cy="90" r="1.3" fill="#f2dfc2" opacity="0.85"/><circle cx="323" cy="394" r="0.7" fill="#f2dfc2" opacity="0.76"/><circle cx="363" cy="220" r="0.6" fill="#f2dfc2" opacity="0.64"/><circle cx="727" cy="69" r="0.8" fill="#f2dfc2" opacity="0.76"/><circle cx="663" cy="509" r="0.7" fill="#f2dfc2" opacity="0.42"/><circle cx="736" cy="618" r="0.8" fill="#f2dfc2" opacity="0.52"/><circle cx="573" cy="403" r="0.5" fill="#f2dfc2" opacity="0.85"/><circle cx="580" cy="522" r="0.6" fill="#f2dfc2" opacity="0.70"/><circle cx="694" cy="393" r="0.9" fill="#f2dfc2" opacity="0.82"/><circle cx="680" cy="116" r="0.6" fill="#f2dfc2" opacity="0.37"/><circle cx="733" cy="99" r="0.7" fill="#f2dfc2" opacity="0.42"/><circle cx="399" cy="459" r="0.6" fill="#f2dfc2" opacity="0.37"/><circle cx="552" cy="479" r="0.5" fill="#f2dfc2" opacity="0.72"/><circle cx="437" cy="247" r="0.8" fill="#f2dfc2" opacity="0.65"/><circle cx="583" cy="194" r="0.8" fill="#f2dfc2" opacity="0.52"/><circle cx="400" cy="246" r="0.7" fill="#f2dfc2" opacity="0.60"/><circle cx="492" cy="15" r="0.9" fill="#f2dfc2" opacity="0.89"/><circle cx="505" cy="283" r="0.9" fill="#f2dfc2" opacity="0.78"/><circle cx="501" cy="114" r="0.8" fill="#f2dfc2" opacity="0.57"/><circle cx="312" cy="227" r="0.7" fill="#f2dfc2" opacity="0.40"/><circle cx="493" cy="323" r="0.5" fill="#f2dfc2" opacity="0.37"/><circle cx="343" cy="584" r="0.7" fill="#f2dfc2" opacity="0.78"/><circle cx="527" cy="34" r="0.9" fill="#f2dfc2" opacity="0.84"/><circle cx="595" cy="496" r="0.5" fill="#f2dfc2" opacity="0.82"/><circle cx="761" cy="463" r="1.3" fill="#f2dfc2" opacity="0.41"/><circle cx="344" cy="561" r="0.7" fill="#f2dfc2" opacity="0.88"/><circle cx="722" cy="105" r="1.3" fill="#f2dfc2" opacity="0.75"/><circle cx="387" cy="527" r="0.9" fill="#f2dfc2" opacity="0.77"/><circle cx="357" cy="568" r="0.7" fill="#f2dfc2" opacity="0.85"/><circle cx="500" cy="161" r="0.8" fill="#f2dfc2" opacity="0.46"/><circle cx="407" cy="320" r="0.7" fill="#f2dfc2" opacity="0.55"/><circle cx="376" cy="255" r="1.0" fill="#f2dfc2" opacity="0.87"/><circle cx="608" cy="567" r="0.6" fill="#f2dfc2" opacity="0.79"/><circle cx="408" cy="486" r="0.5" fill="#f2dfc2" opacity="0.70"/><circle cx="454" cy="553" r="0.9" fill="#f2dfc2" opacity="0.64"/><circle cx="613" cy="567" r="0.7" fill="#f2dfc2" opacity="0.90"/><circle cx="584" cy="250" r="1.3" fill="#f2dfc2" opacity="0.55"/><circle cx="461" cy="234" r="0.6" fill="#f2dfc2" opacity="0.55"/><circle cx="649" cy="280" r="0.6" fill="#f2dfc2" opacity="0.69"/><circle cx="743" cy="188" r="0.9" fill="#f2dfc2" opacity="0.49"/><circle cx="589" cy="623" r="0.9" fill="#f2dfc2" opacity="0.86"/><circle cx="713" cy="464" r="1.0" fill="#f2dfc2" opacity="0.37"/><circle cx="352" cy="390" r="0.8" fill="#f2dfc2" opacity="0.58"/><circle cx="456" cy="30" r="0.8" fill="#f2dfc2" opacity="0.47"/><circle cx="595" cy="14" r="0.5" fill="#f2dfc2" opacity="0.66"/><circle cx="427" cy="331" r="0.9" fill="#f2dfc2" opacity="0.47"/><circle cx="562" cy="373" r="0.6" fill="#f2dfc2" opacity="0.55"/><circle cx="680" cy="100" r="0.5" fill="#f2dfc2" opacity="0.87"/><circle cx="398" cy="95" r="0.5" fill="#f2dfc2" opacity="0.39"/><circle cx="350" cy="421" r="0.7" fill="#f2dfc2" opacity="0.57"/><circle cx="408" cy="7" r="1.0" fill="#f2dfc2" opacity="0.80"/><circle cx="711" cy="376" r="0.9" fill="#f2dfc2" opacity="0.59"/><circle cx="733" cy="464" r="0.6" fill="#f2dfc2" opacity="0.44"/><circle cx="280" cy="39" r="0.5" fill="#f2dfc2" opacity="0.57"/><circle cx="395" cy="37" r="1.3" fill="#f2dfc2" opacity="0.41"/><circle cx="576" cy="416" r="0.6" fill="#f2dfc2" opacity="0.43"/><circle cx="376" cy="385" r="0.9" fill="#f2dfc2" opacity="0.71"/><circle cx="481" cy="388" r="0.9" fill="#f2dfc2" opacity="0.52"/><circle cx="425" cy="31" r="1.0" fill="#f2dfc2" opacity="0.78"/><circle cx="626" cy="4" r="1.3" fill="#f2dfc2" opacity="0.59"/><circle cx="721" cy="51" r="1.0" fill="#f2dfc2" opacity="0.60"/><circle cx="389" cy="67" r="0.6" fill="#f2dfc2" opacity="0.70"/><circle cx="340" cy="564" r="1.0" fill="#f2dfc2" opacity="0.87"/><circle cx="407" cy="33" r="1.0" fill="#f2dfc2" opacity="0.65"/><circle cx="491" cy="499" r="0.9" fill="#f2dfc2" opacity="0.88"/><circle cx="423" cy="588" r="0.6" fill="#f2dfc2" opacity="0.40"/><circle cx="525" cy="107" r="0.6" fill="#f2dfc2" opacity="0.81"/><circle cx="378" cy="101" r="0.7" fill="#f2dfc2" opacity="0.46"/><circle cx="468" cy="381" r="0.8" fill="#f2dfc2" opacity="0.85"/><circle cx="585" cy="439" r="1.0" fill="#f2dfc2" opacity="0.81"/><circle cx="539" cy="299" r="0.9" fill="#f2dfc2" opacity="0.73"/><circle cx="694" cy="277" r="1.0" fill="#f2dfc2" opacity="0.48"/><circle cx="707" cy="500" r="0.8" fill="#f2dfc2" opacity="0.69"/><circle cx="318" cy="577" r="0.6" fill="#f2dfc2" opacity="0.37"/><circle cx="334" cy="394" r="0.6" fill="#f2dfc2" opacity="0.54"/><circle cx="349" cy="18" r="0.5" fill="#f2dfc2" opacity="0.43"/><circle cx="591" cy="27" r="0.5" fill="#f2dfc2" opacity="0.76"/><circle cx="312" cy="374" r="0.7" fill="#f2dfc2" opacity="0.46"/><circle cx="741" cy="338" r="1.0" fill="#f2dfc2" opacity="0.39"/><circle cx="699" cy="579" r="0.8" fill="#f2dfc2" opacity="0.41"/><circle cx="379" cy="71" r="0.5" fill="#f2dfc2" opacity="0.87"/><circle cx="720" cy="477" r="0.5" fill="#f2dfc2" opacity="0.80"/><circle cx="585" cy="182" r="0.5" fill="#f2dfc2" opacity="0.42"/><circle cx="663" cy="409" r="0.7" fill="#f2dfc2" opacity="0.53"/><circle cx="485" cy="13" r="0.7" fill="#f2dfc2" opacity="0.86"/><circle cx="303" cy="481" r="0.7" fill="#f2dfc2" opacity="0.77"/><circle cx="571" cy="301" r="0.7" fill="#f2dfc2" opacity="0.69"/><circle cx="295" cy="261" r="0.8" fill="#f2dfc2" opacity="0.64"/><circle cx="327" cy="297" r="0.5" fill="#f2dfc2" opacity="0.65"/><circle cx="385" cy="546" r="0.5" fill="#f2dfc2" opacity="0.67"/><circle cx="419" cy="276" r="0.9" fill="#f2dfc2" opacity="0.46"/><circle cx="648" cy="619" r="0.5" fill="#f2dfc2" opacity="0.54"/><circle cx="326" cy="440" r="1.3" fill="#f2dfc2" opacity="0.45"/><circle cx="519" cy="220" r="1.3" fill="#f2dfc2" opacity="0.63"/><circle cx="559" cy="101" r="1.3" fill="#f2dfc2" opacity="0.47"/><circle cx="618" cy="315" r="0.5" fill="#f2dfc2" opacity="0.87"/><circle cx="650" cy="310" r="1.0" fill="#f2dfc2" opacity="0.66"/><circle cx="331" cy="207" r="0.5" fill="#f2dfc2" opacity="0.57"/><circle cx="471" cy="564" r="0.5" fill="#f2dfc2" opacity="0.58"/><circle cx="592" cy="235" r="0.7" fill="#f2dfc2" opacity="0.49"/><circle cx="715" cy="317" r="0.8" fill="#f2dfc2" opacity="0.89"/><circle cx="585" cy="598" r="0.6" fill="#f2dfc2" opacity="0.64"/><circle cx="644" cy="477" r="1.0" fill="#f2dfc2" opacity="0.37"/><circle cx="561" cy="330" r="1.3" fill="#f2dfc2" opacity="0.81"/><circle cx="600" cy="470" r="0.6" fill="#f2dfc2" opacity="0.60"/><circle cx="613" cy="163" r="0.6" fill="#f2dfc2" opacity="0.42"/><circle cx="503" cy="560" r="0.6" fill="#f2dfc2" opacity="0.63"/><circle cx="409" cy="478" r="1.3" fill="#f2dfc2" opacity="0.81"/><circle cx="355" cy="99" r="0.6" fill="#f2dfc2" opacity="0.75"/><circle cx="571" cy="221" r="0.6" fill="#f2dfc2" opacity="0.53"/><circle cx="371" cy="617" r="1.0" fill="#f2dfc2" opacity="0.90"/><circle cx="360" cy="416" r="0.6" fill="#f2dfc2" opacity="0.56"/><circle cx="755" cy="503" r="1.0" fill="#f2dfc2" opacity="0.51"/><circle cx="412" cy="69" r="0.5" fill="#f2dfc2" opacity="0.50"/><circle cx="708" cy="294" r="0.5" fill="#f2dfc2" opacity="0.57"/><circle cx="662" cy="439" r="0.9" fill="#f2dfc2" opacity="0.89"/><circle cx="423" cy="14" r="0.7" fill="#f2dfc2" opacity="0.68"/><circle cx="475" cy="469" r="1.3" fill="#f2dfc2" opacity="0.59"/><circle cx="557" cy="474" r="0.8" fill="#f2dfc2" opacity="0.82"/><circle cx="603" cy="413" r="1.3" fill="#f2dfc2" opacity="0.70"/><circle cx="562" cy="145" r="0.6" fill="#f2dfc2" opacity="0.70"/><circle cx="499" cy="198" r="1.0" fill="#f2dfc2" opacity="0.74"/><circle cx="712" cy="153" r="0.8" fill="#f2dfc2" opacity="0.74"/><circle cx="584" cy="158" r="0.8" fill="#f2dfc2" opacity="0.62"/><circle cx="289" cy="543" r="0.9" fill="#f2dfc2" opacity="0.72"/><circle cx="729" cy="116" r="1.0" fill="#f2dfc2" opacity="0.53"/><circle cx="285" cy="527" r="0.5" fill="#f2dfc2" opacity="0.37"/><circle cx="542" cy="102" r="1.3" fill="#f2dfc2" opacity="0.87"/><circle cx="377" cy="220" r="1.3" fill="#f2dfc2" opacity="0.67"/><circle cx="541" cy="454" r="0.9" fill="#f2dfc2" opacity="0.36"/><circle cx="663" cy="234" r="0.7" fill="#f2dfc2" opacity="0.58"/><circle cx="738" cy="133" r="1.0" fill="#f2dfc2" opacity="0.45"/><circle cx="528" cy="590" r="1.0" fill="#f2dfc2" opacity="0.89"/><circle cx="452" cy="36" r="0.7" fill="#f2dfc2" opacity="0.56"/><circle cx="310" cy="48" r="0.8" fill="#f2dfc2" opacity="0.70"/><circle cx="606" cy="367" r="0.5" fill="#f2dfc2" opacity="0.47"/><circle cx="638" cy="595" r="0.9" fill="#f2dfc2" opacity="0.88"/><circle cx="760" cy="608" r="0.8" fill="#f2dfc2" opacity="0.47"/><circle cx="342" cy="492" r="1.3" fill="#f2dfc2" opacity="0.79"/><circle cx="373" cy="407" r="1.0" fill="#f2dfc2" opacity="0.47"/><circle cx="746" cy="224" r="1.0" fill="#f2dfc2" opacity="0.81"/><circle cx="664" cy="262" r="0.7" fill="#f2dfc2" opacity="0.77"/><circle cx="594" cy="494" r="0.8" fill="#f2dfc2" opacity="0.55"/><circle cx="691" cy="169" r="0.8" fill="#f2dfc2" opacity="0.73"/><circle cx="755" cy="430" r="0.8" fill="#f2dfc2" opacity="0.35"/><circle cx="629" cy="178" r="0.6" fill="#f2dfc2" opacity="0.71"/><circle cx="435" cy="307" r="0.9" fill="#f2dfc2" opacity="0.70"/><circle cx="598" cy="229" r="0.7" fill="#f2dfc2" opacity="0.82"/><circle cx="308" cy="524" r="0.7" fill="#f2dfc2" opacity="0.78"/><circle cx="348" cy="526" r="1.0" fill="#f2dfc2" opacity="0.67"/><circle cx="597" cy="133" r="0.5" fill="#f2dfc2" opacity="0.71"/><circle cx="401" cy="64" r="0.6" fill="#f2dfc2" opacity="0.82"/><circle cx="370" cy="286" r="1.3" fill="#f2dfc2" opacity="0.43"/><circle cx="717" cy="501" r="0.6" fill="#f2dfc2" opacity="0.69"/><circle cx="612" cy="619" r="0.5" fill="#f2dfc2" opacity="0.72"/><circle cx="712" cy="499" r="1.3" fill="#f2dfc2" opacity="0.51"/><circle cx="519" cy="135" r="0.5" fill="#f2dfc2" opacity="0.76"/><circle cx="492" cy="559" r="0.9" fill="#f2dfc2" opacity="0.42"/><circle cx="482" cy="524" r="0.8" fill="#f2dfc2" opacity="0.62"/><circle cx="308" cy="296" r="0.6" fill="#f2dfc2" opacity="0.74"/><circle cx="399" cy="104" r="0.9" fill="#f2dfc2" opacity="0.82"/><circle cx="283" cy="532" r="0.8" fill="#f2dfc2" opacity="0.73"/><circle cx="520" cy="188" r="0.8" fill="#f2dfc2" opacity="0.56"/><circle cx="482" cy="608" r="0.5" fill="#f2dfc2" opacity="0.45"/><circle cx="454" cy="409" r="0.5" fill="#f2dfc2" opacity="0.69"/><circle cx="610" cy="590" r="0.7" fill="#f2dfc2" opacity="0.79"/><circle cx="325" cy="306" r="1.3" fill="#f2dfc2" opacity="0.84"/><circle cx="296" cy="455" r="1.0" fill="#f2dfc2" opacity="0.42"/><circle cx="326" cy="417" r="0.7" fill="#f2dfc2" opacity="0.61"/><circle cx="534" cy="488" r="0.6" fill="#f2dfc2" opacity="0.51"/><circle cx="445" cy="159" r="0.5" fill="#f2dfc2" opacity="0.80"/><circle cx="421" cy="524" r="0.8" fill="#f2dfc2" opacity="0.53"/><circle cx="755" cy="553" r="0.7" fill="#f2dfc2" opacity="0.89"/><circle cx="596" cy="501" r="0.7" fill="#f2dfc2" opacity="0.46"/><circle cx="624" cy="81" r="1.0" fill="#f2dfc2" opacity="0.40"/><circle cx="761" cy="252" r="0.9" fill="#f2dfc2" opacity="0.84"/><circle cx="543" cy="31" r="0.7" fill="#f2dfc2" opacity="0.41"/><circle cx="302" cy="520" r="0.8" fill="#f2dfc2" opacity="0.68"/><circle cx="598" cy="499" r="0.9" fill="#f2dfc2" opacity="0.69"/><circle cx="578" cy="397" r="1.0" fill="#f2dfc2" opacity="0.73"/><circle cx="703" cy="53" r="0.5" fill="#f2dfc2" opacity="0.72"/><circle cx="501" cy="483" r="0.5" fill="#f2dfc2" opacity="0.71"/><circle cx="700" cy="267" r="0.5" fill="#f2dfc2" opacity="0.85"/><circle cx="597" cy="233" r="1.3" fill="#f2dfc2" opacity="0.43"/><circle cx="429" cy="450" r="1.3" fill="#f2dfc2" opacity="0.52"/><circle cx="484" cy="202" r="0.8" fill="#f2dfc2" opacity="0.66"/><circle cx="559" cy="578" r="0.8" fill="#f2dfc2" opacity="0.66"/><circle cx="299" cy="75" r="1.3" fill="#f2dfc2" opacity="0.58"/><circle cx="616" cy="256" r="0.5" fill="#f2dfc2" opacity="0.36"/><circle cx="467" cy="375" r="1.0" fill="#f2dfc2" opacity="0.89"/><circle cx="510" cy="261" r="0.5" fill="#f2dfc2" opacity="0.40"/><circle cx="508" cy="567" r="1.0" fill="#f2dfc2" opacity="0.36"/><circle cx="282" cy="433" r="0.5" fill="#f2dfc2" opacity="0.89"/><circle cx="695" cy="138" r="0.5" fill="#f2dfc2" opacity="0.42"/><circle cx="289" cy="455" r="0.6" fill="#f2dfc2" opacity="0.60"/><circle cx="639" cy="584" r="0.7" fill="#f2dfc2" opacity="0.78"/><circle cx="625" cy="542" r="1.0" fill="#f2dfc2" opacity="0.77"/><circle cx="422" cy="353" r="0.8" fill="#f2dfc2" opacity="0.60"/><circle cx="730" cy="161" r="0.5" fill="#f2dfc2" opacity="0.74"/><circle cx="286" cy="9" r="1.0" fill="#f2dfc2" opacity="0.73"/><circle cx="579" cy="246" r="0.7" fill="#f2dfc2" opacity="0.75"/><circle cx="360" cy="545" r="0.8" fill="#f2dfc2" opacity="0.68"/><circle cx="433" cy="601" r="1.0" fill="#f2dfc2" opacity="0.59"/><circle cx="607" cy="92" r="1.3" fill="#f2dfc2" opacity="0.41"/><circle cx="741" cy="104" r="1.3" fill="#f2dfc2" opacity="0.58"/><circle cx="466" cy="498" r="0.7" fill="#f2dfc2" opacity="0.78"/><circle cx="554" cy="185" r="0.5" fill="#f2dfc2" opacity="0.69"/><circle cx="594" cy="508" r="0.9" fill="#f2dfc2" opacity="0.53"/><circle cx="573" cy="619" r="1.3" fill="#f2dfc2" opacity="0.43"/><circle cx="682" cy="370" r="0.6" fill="#f2dfc2" opacity="0.56"/><circle cx="611" cy="381" r="0.6" fill="#f2dfc2" opacity="0.79"/><circle cx="417" cy="1" r="0.7" fill="#f2dfc2" opacity="0.50"/><circle cx="356" cy="583" r="1.3" fill="#f2dfc2" opacity="0.84"/><circle cx="300" cy="527" r="1.3" fill="#f2dfc2" opacity="0.84"/><circle cx="760" cy="93" r="1.3" fill="#f2dfc2" opacity="0.79"/><circle cx="545" cy="492" r="0.8" fill="#f2dfc2" opacity="0.54"/><circle cx="321" cy="350" r="1.3" fill="#f2dfc2" opacity="0.56"/><circle cx="660" cy="457" r="0.6" fill="#f2dfc2" opacity="0.52"/><circle cx="308" cy="250" r="1.0" fill="#f2dfc2" opacity="0.46"/><circle cx="403" cy="475" r="1.3" fill="#f2dfc2" opacity="0.56"/><circle cx="541" cy="339" r="0.7" fill="#f2dfc2" opacity="0.77"/><circle cx="392" cy="367" r="0.7" fill="#f2dfc2" opacity="0.84"/><circle cx="532" cy="302" r="0.9" fill="#f2dfc2" opacity="0.46"/><circle cx="383" cy="58" r="1.3" fill="#f2dfc2" opacity="0.74"/><circle cx="455" cy="357" r="0.8" fill="#f2dfc2" opacity="0.78"/><circle cx="694" cy="156" r="0.8" fill="#f2dfc2" opacity="0.56"/><circle cx="331" cy="401" r="1.3" fill="#f2dfc2" opacity="0.39"/><circle cx="433" cy="19" r="0.7" fill="#f2dfc2" opacity="0.64"/><circle cx="290" cy="21" r="1.3" fill="#f2dfc2" opacity="0.83"/><circle cx="515" cy="359" r="0.7" fill="#f2dfc2" opacity="0.86"/><circle cx="415" cy="61" r="0.8" fill="#f2dfc2" opacity="0.77"/><circle cx="675" cy="610" r="0.7" fill="#f2dfc2" opacity="0.81"/><circle cx="444" cy="630" r="0.8" fill="#f2dfc2" opacity="0.40"/><circle cx="305" cy="353" r="1.3" fill="#f2dfc2" opacity="0.74"/><circle cx="515" cy="535" r="0.5" fill="#f2dfc2" opacity="0.82"/><circle cx="589" cy="584" r="1.0" fill="#f2dfc2" opacity="0.88"/><circle cx="404" cy="357" r="1.0" fill="#f2dfc2" opacity="0.40"/><circle cx="725" cy="321" r="0.6" fill="#f2dfc2" opacity="0.60"/><circle cx="357" cy="611" r="1.0" fill="#f2dfc2" opacity="0.47"/><circle cx="299" cy="162" r="0.7" fill="#f2dfc2" opacity="0.38"/><circle cx="547" cy="18" r="0.5" fill="#f2dfc2" opacity="0.49"/><circle cx="528" cy="468" r="1.3" fill="#f2dfc2" opacity="0.89"/><circle cx="307" cy="92" r="1.3" fill="#f2dfc2" opacity="0.35"/><circle cx="376" cy="474" r="0.9" fill="#f2dfc2" opacity="0.68"/><circle cx="646" cy="67" r="0.7" fill="#f2dfc2" opacity="0.55"/><circle cx="468" cy="237" r="0.8" fill="#f2dfc2" opacity="0.44"/><circle cx="395" cy="91" r="1.0" fill="#f2dfc2" opacity="0.84"/><circle cx="506" cy="578" r="1.3" fill="#f2dfc2" opacity="0.37"/><circle cx="728" cy="140" r="0.9" fill="#f2dfc2" opacity="0.83"/><circle cx="709" cy="88" r="0.8" fill="#f2dfc2" opacity="0.88"/><circle cx="727" cy="244" r="0.5" fill="#f2dfc2" opacity="0.70"/><circle cx="498" cy="215" r="1.3" fill="#f2dfc2" opacity="0.48"/><circle cx="336" cy="232" r="0.7" fill="#f2dfc2" opacity="0.47"/><circle cx="307" cy="452" r="0.9" fill="#f2dfc2" opacity="0.84"/><circle cx="492" cy="95" r="0.8" fill="#f2dfc2" opacity="0.58"/><circle cx="355" cy="172" r="1.3" fill="#f2dfc2" opacity="0.51"/><circle cx="668" cy="165" r="0.5" fill="#f2dfc2" opacity="0.52"/><circle cx="716" cy="72" r="0.9" fill="#f2dfc2" opacity="0.38"/><circle cx="712" cy="423" r="0.6" fill="#f2dfc2" opacity="0.66"/><circle cx="683" cy="75" r="1.3" fill="#f2dfc2" opacity="0.46"/><circle cx="456" cy="627" r="0.6" fill="#f2dfc2" opacity="0.86"/><circle cx="327" cy="183" r="0.6" fill="#f2dfc2" opacity="0.38"/><circle cx="631" cy="186" r="1.0" fill="#f2dfc2" opacity="0.36"/><circle cx="670" cy="216" r="0.6" fill="#f2dfc2" opacity="0.59"/><circle cx="661" cy="597" r="0.7" fill="#f2dfc2" opacity="0.45"/><circle cx="490" cy="577" r="0.6" fill="#f2dfc2" opacity="0.50"/><circle cx="367" cy="534" r="0.9" fill="#f2dfc2" opacity="0.77"/><circle cx="624" cy="125" r="0.5" fill="#f2dfc2" opacity="0.81"/><circle cx="710" cy="463" r="1.3" fill="#f2dfc2" opacity="0.50"/><circle cx="380" cy="388" r="1.0" fill="#f2dfc2" opacity="0.70"/><circle cx="373" cy="195" r="0.5" fill="#f2dfc2" opacity="0.39"/><circle cx="634" cy="258" r="1.0" fill="#f2dfc2" opacity="0.85"/><circle cx="530" cy="220" r="0.7" fill="#f2dfc2" opacity="0.81"/><circle cx="698" cy="312" r="0.5" fill="#f2dfc2" opacity="0.58"/><circle cx="649" cy="84" r="1.0" fill="#f2dfc2" opacity="0.50"/><circle cx="370" cy="526" r="0.7" fill="#f2dfc2" opacity="0.37"/><circle cx="619" cy="364" r="1.3" fill="#f2dfc2" opacity="0.35"/><circle cx="531" cy="282" r="0.9" fill="#f2dfc2" opacity="0.39"/><circle cx="452" cy="155" r="1.3" fill="#f2dfc2" opacity="0.83"/><circle cx="435" cy="450" r="0.8" fill="#f2dfc2" opacity="0.67"/><circle cx="714" cy="185" r="0.5" fill="#f2dfc2" opacity="0.87"/><circle cx="519" cy="325" r="0.9" fill="#f2dfc2" opacity="0.79"/><circle cx="345" cy="154" r="0.5" fill="#f2dfc2" opacity="0.47"/><circle cx="368" cy="65" r="0.7" fill="#f2dfc2" opacity="0.66"/><circle cx="741" cy="12" r="1.0" fill="#f2dfc2" opacity="0.76"/><circle cx="406" cy="530" r="1.0" fill="#f2dfc2" opacity="0.67"/><circle cx="533" cy="445" r="0.5" fill="#f2dfc2" opacity="0.54"/><circle cx="325" cy="113" r="0.7" fill="#f2dfc2" opacity="0.42"/><circle cx="518" cy="317" r="0.7" fill="#f2dfc2" opacity="0.41"/><circle cx="339" cy="560" r="0.9" fill="#f2dfc2" opacity="0.68"/><circle cx="696" cy="93" r="0.9" fill="#f2dfc2" opacity="0.60"/><circle cx="472" cy="600" r="0.5" fill="#f2dfc2" opacity="0.87"/><circle cx="468" cy="266" r="1.3" fill="#f2dfc2" opacity="0.68"/><circle cx="297" cy="614" r="0.5" fill="#f2dfc2" opacity="0.78"/><circle cx="444" cy="152" r="0.7" fill="#f2dfc2" opacity="0.74"/><circle cx="687" cy="357" r="0.7" fill="#f2dfc2" opacity="0.80"/><circle cx="689" cy="34" r="0.9" fill="#f2dfc2" opacity="0.43"/><circle cx="609" cy="224" r="1.3" fill="#f2dfc2" opacity="0.58"/><circle cx="586" cy="231" r="0.9" fill="#f2dfc2" opacity="0.45"/><circle cx="437" cy="127" r="1.0" fill="#f2dfc2" opacity="0.36"/><circle cx="347" cy="614" r="1.3" fill="#f2dfc2" opacity="0.90"/><circle cx="499" cy="30" r="0.5" fill="#f2dfc2" opacity="0.37"/><circle cx="590" cy="168" r="1.0" fill="#f2dfc2" opacity="0.69"/><circle cx="583" cy="510" r="0.5" fill="#f2dfc2" opacity="0.69"/><circle cx="401" cy="329" r="0.8" fill="#f2dfc2" opacity="0.48"/><circle cx="299" cy="72" r="0.7" fill="#f2dfc2" opacity="0.71"/><circle cx="338" cy="376" r="0.9" fill="#f2dfc2" opacity="0.85"/><circle cx="321" cy="374" r="0.6" fill="#f2dfc2" opacity="0.59"/><circle cx="527" cy="560" r="0.8" fill="#f2dfc2" opacity="0.67"/><circle cx="412" cy="466" r="1.0" fill="#f2dfc2" opacity="0.65"/><circle cx="686" cy="386" r="0.9" fill="#f2dfc2" opacity="0.47"/><circle cx="467" cy="347" r="0.7" fill="#f2dfc2" opacity="0.60"/><circle cx="545" cy="388" r="0.8" fill="#f2dfc2" opacity="0.80"/><circle cx="295" cy="211" r="0.6" fill="#f2dfc2" opacity="0.63"/><circle cx="465" cy="371" r="0.5" fill="#f2dfc2" opacity="0.86"/><circle cx="358" cy="603" r="0.7" fill="#f2dfc2" opacity="0.66"/><circle cx="517" cy="180" r="0.6" fill="#f2dfc2" opacity="0.51"/><circle cx="653" cy="100" r="0.5" fill="#f2dfc2" opacity="0.68"/><circle cx="448" cy="416" r="0.9" fill="#f2dfc2" opacity="0.56"/><circle cx="492" cy="466" r="0.5" fill="#f2dfc2" opacity="0.64"/><circle cx="758" cy="429" r="0.6" fill="#f2dfc2" opacity="0.58"/><circle cx="603" cy="89" r="0.6" fill="#f2dfc2" opacity="0.69"/><circle cx="691" cy="520" r="0.9" fill="#f2dfc2" opacity="0.40"/><circle cx="694" cy="584" r="0.8" fill="#f2dfc2" opacity="0.50"/><circle cx="585" cy="400" r="1.0" fill="#f2dfc2" opacity="0.42"/><circle cx="701" cy="3" r="1.3" fill="#f2dfc2" opacity="0.65"/><circle cx="337" cy="252" r="0.9" fill="#f2dfc2" opacity="0.43"/><circle cx="691" cy="177" r="0.9" fill="#f2dfc2" opacity="0.68"/><circle cx="463" cy="286" r="0.8" fill="#f2dfc2" opacity="0.51"/><circle cx="450" cy="223" r="0.9" fill="#f2dfc2" opacity="0.66"/><circle cx="466" cy="204" r="1.3" fill="#f2dfc2" opacity="0.76"/><circle cx="758" cy="241" r="0.7" fill="#f2dfc2" opacity="0.45"/><circle cx="427" cy="92" r="0.9" fill="#f2dfc2" opacity="0.56"/><circle cx="392" cy="520" r="0.7" fill="#f2dfc2" opacity="0.53"/><circle cx="687" cy="531" r="0.7" fill="#f2dfc2" opacity="0.46"/><circle cx="486" cy="576" r="0.5" fill="#f2dfc2" opacity="0.36"/><circle cx="404" cy="567" r="0.7" fill="#f2dfc2" opacity="0.86"/><circle cx="654" cy="341" r="0.8" fill="#f2dfc2" opacity="0.63"/><circle cx="530" cy="434" r="0.8" fill="#f2dfc2" opacity="0.61"/><circle cx="300" cy="428" r="0.8" fill="#f2dfc2" opacity="0.87"/><circle cx="607" cy="332" r="0.5" fill="#f2dfc2" opacity="0.58"/><circle cx="522" cy="411" r="0.9" fill="#f2dfc2" opacity="0.43"/><circle cx="371" cy="267" r="0.8" fill="#f2dfc2" opacity="0.59"/><circle cx="582" cy="631" r="0.7" fill="#f2dfc2" opacity="0.73"/><circle cx="641" cy="58" r="0.7" fill="#f2dfc2" opacity="0.52"/><circle cx="753" cy="523" r="0.9" fill="#f2dfc2" opacity="0.45"/><circle cx="597" cy="187" r="0.7" fill="#f2dfc2" opacity="0.80"/><circle cx="758" cy="562" r="0.8" fill="#f2dfc2" opacity="0.70"/><circle cx="533" cy="517" r="0.6" fill="#f2dfc2" opacity="0.63"/><circle cx="371" cy="115" r="1.0" fill="#f2dfc2" opacity="0.66"/><circle cx="331" cy="361" r="1.0" fill="#f2dfc2" opacity="0.70"/><circle cx="300" cy="260" r="1.3" fill="#f2dfc2" opacity="0.35"/><circle cx="623" cy="350" r="0.7" fill="#f2dfc2" opacity="0.57"/><circle cx="328" cy="10" r="0.5" fill="#f2dfc2" opacity="0.46"/><circle cx="520" cy="350" r="0.7" fill="#f2dfc2" opacity="0.83"/><circle cx="713" cy="326" r="0.6" fill="#f2dfc2" opacity="0.67"/><circle cx="479" cy="77" r="0.6" fill="#f2dfc2" opacity="0.64"/><circle cx="526" cy="18" r="0.5" fill="#f2dfc2" opacity="0.44"/><circle cx="532" cy="521" r="0.9" fill="#f2dfc2" opacity="0.59"/><circle cx="667" cy="412" r="1.0" fill="#f2dfc2" opacity="0.77"/><circle cx="436" cy="453" r="0.7" fill="#f2dfc2" opacity="0.50"/><circle cx="296" cy="398" r="1.3" fill="#f2dfc2" opacity="0.85"/><circle cx="561" cy="221" r="0.8" fill="#f2dfc2" opacity="0.69"/><circle cx="289" cy="139" r="0.8" fill="#f2dfc2" opacity="0.67"/><circle cx="743" cy="278" r="0.9" fill="#f2dfc2" opacity="0.48"/><circle cx="388" cy="101" r="0.9" fill="#f2dfc2" opacity="0.82"/><circle cx="432" cy="569" r="1.3" fill="#f2dfc2" opacity="0.60"/><circle cx="482" cy="159" r="0.8" fill="#f2dfc2" opacity="0.89"/><circle cx="313" cy="429" r="1.0" fill="#f2dfc2" opacity="0.75"/><circle cx="387" cy="196" r="1.0" fill="#f2dfc2" opacity="0.62"/><circle cx="663" cy="154" r="0.6" fill="#f2dfc2" opacity="0.44"/><circle cx="463" cy="5" r="0.7" fill="#f2dfc2" opacity="0.57"/><circle cx="455" cy="212" r="1.3" fill="#f2dfc2" opacity="0.56"/><circle cx="475" cy="41" r="0.5" fill="#f2dfc2" opacity="0.58"/><circle cx="721" cy="351" r="0.8" fill="#f2dfc2" opacity="0.46"/><circle cx="417" cy="150" r="0.5" fill="#f2dfc2" opacity="0.50"/><circle cx="292" cy="509" r="0.6" fill="#f2dfc2" opacity="0.74"/><circle cx="325" cy="171" r="1.3" fill="#f2dfc2" opacity="0.78"/><circle cx="548" cy="296" r="1.3" fill="#f2dfc2" opacity="0.79"/><circle cx="357" cy="223" r="1.0" fill="#f2dfc2" opacity="0.57"/><circle cx="584" cy="368" r="0.7" fill="#f2dfc2" opacity="0.87"/><circle cx="524" cy="144" r="0.8" fill="#f2dfc2" opacity="0.72"/><circle cx="735" cy="632" r="0.9" fill="#f2dfc2" opacity="0.84"/><circle cx="564" cy="233" r="0.6" fill="#f2dfc2" opacity="0.57"/><circle cx="526" cy="79" r="1.3" fill="#f2dfc2" opacity="0.42"/><circle cx="528" cy="343" r="0.7" fill="#f2dfc2" opacity="0.75"/><circle cx="649" cy="18" r="1.0" fill="#f2dfc2" opacity="0.66"/><circle cx="430" cy="247" r="0.5" fill="#f2dfc2" opacity="0.73"/><circle cx="655" cy="147" r="0.6" fill="#f2dfc2" opacity="0.71"/><circle cx="333" cy="356" r="0.7" fill="#f2dfc2" opacity="0.79"/><circle cx="646" cy="122" r="1.0" fill="#f2dfc2" opacity="0.52"/><circle cx="389" cy="80" r="1.0" fill="#f2dfc2" opacity="0.57"/><circle cx="452" cy="534" r="0.8" fill="#f2dfc2" opacity="0.78"/><circle cx="706" cy="545" r="0.6" fill="#f2dfc2" opacity="0.87"/><circle cx="365" cy="232" r="1.3" fill="#f2dfc2" opacity="0.71"/><circle cx="450" cy="261" r="1.0" fill="#f2dfc2" opacity="0.74"/><circle cx="503" cy="633" r="0.8" fill="#f2dfc2" opacity="0.54"/><circle cx="584" cy="115" r="0.5" fill="#f2dfc2" opacity="0.50"/><circle cx="574" cy="139" r="1.0" fill="#f2dfc2" opacity="0.37"/><circle cx="299" cy="103" r="0.6" fill="#f2dfc2" opacity="0.77"/><circle cx="355" cy="467" r="0.9" fill="#f2dfc2" opacity="0.52"/><circle cx="588" cy="114" r="1.3" fill="#f2dfc2" opacity="0.48"/><circle cx="520" cy="330" r="0.8" fill="#f2dfc2" opacity="0.72"/><circle cx="558" cy="592" r="0.5" fill="#f2dfc2" opacity="0.81"/><circle cx="655" cy="181" r="0.5" fill="#f2dfc2" opacity="0.83"/><circle cx="563" cy="441" r="0.6" fill="#f2dfc2" opacity="0.72"/><circle cx="298" cy="202" r="1.3" fill="#f2dfc2" opacity="0.85"/><circle cx="642" cy="55" r="1.0" fill="#f2dfc2" opacity="0.76"/><circle cx="762" cy="390" r="0.6" fill="#f2dfc2" opacity="0.50"/><circle cx="323" cy="599" r="0.8" fill="#f2dfc2" opacity="0.59"/><circle cx="444" cy="318" r="1.0" fill="#f2dfc2" opacity="0.81"/><circle cx="583" cy="287" r="0.5" fill="#f2dfc2" opacity="0.72"/><circle cx="379" cy="426" r="1.3" fill="#f2dfc2" opacity="0.86"/><circle cx="342" cy="482" r="0.5" fill="#f2dfc2" opacity="0.87"/><circle cx="679" cy="354" r="0.6" fill="#f2dfc2" opacity="0.65"/><circle cx="748" cy="404" r="0.9" fill="#f2dfc2" opacity="0.49"/><circle cx="745" cy="106" r="0.7" fill="#f2dfc2" opacity="0.58"/><circle cx="377" cy="197" r="0.6" fill="#f2dfc2" opacity="0.73"/><circle cx="515" cy="306" r="1.0" fill="#f2dfc2" opacity="0.48"/><circle cx="529" cy="282" r="1.0" fill="#f2dfc2" opacity="0.54"/><circle cx="425" cy="560" r="0.6" fill="#f2dfc2" opacity="0.67"/><circle cx="396" cy="398" r="0.5" fill="#f2dfc2" opacity="0.65"/><circle cx="647" cy="107" r="1.0" fill="#f2dfc2" opacity="0.44"/><circle cx="753" cy="531" r="0.8" fill="#f2dfc2" opacity="0.81"/><circle cx="335" cy="183" r="0.7" fill="#f2dfc2" opacity="0.62"/><circle cx="301" cy="567" r="0.7" fill="#f2dfc2" opacity="0.46"/><circle cx="619" cy="284" r="0.5" fill="#f2dfc2" opacity="0.44"/><circle cx="495" cy="360" r="0.7" fill="#f2dfc2" opacity="0.44"/><circle cx="315" cy="7" r="1.3" fill="#f2dfc2" opacity="0.62"/><circle cx="641" cy="210" r="1.0" fill="#f2dfc2" opacity="0.66"/><circle cx="333" cy="309" r="0.8" fill="#f2dfc2" opacity="0.62"/><circle cx="659" cy="204" r="0.7" fill="#f2dfc2" opacity="0.86"/><circle cx="591" cy="397" r="1.0" fill="#f2dfc2" opacity="0.71"/><circle cx="401" cy="156" r="0.6" fill="#f2dfc2" opacity="0.76"/><circle cx="292" cy="250" r="0.6" fill="#f2dfc2" opacity="0.51"/><circle cx="370" cy="404" r="1.3" fill="#f2dfc2" opacity="0.84"/><circle cx="609" cy="65" r="1.0" fill="#f2dfc2" opacity="0.81"/><circle cx="639" cy="207" r="0.6" fill="#f2dfc2" opacity="0.71"/><circle cx="452" cy="146" r="0.6" fill="#f2dfc2" opacity="0.65"/><circle cx="458" cy="526" r="0.6" fill="#f2dfc2" opacity="0.38"/><circle cx="332" cy="508" r="1.3" fill="#f2dfc2" opacity="0.90"/><circle cx="475" cy="32" r="0.6" fill="#f2dfc2" opacity="0.62"/><circle cx="521" cy="100" r="0.7" fill="#f2dfc2" opacity="0.68"/><circle cx="583" cy="90" r="0.6" fill="#f2dfc2" opacity="0.44"/><circle cx="494" cy="614" r="0.5" fill="#f2dfc2" opacity="0.89"/><circle cx="691" cy="303" r="0.6" fill="#f2dfc2" opacity="0.75"/><circle cx="281" cy="532" r="1.3" fill="#f2dfc2" opacity="0.81"/><circle cx="527" cy="91" r="0.5" fill="#f2dfc2" opacity="0.71"/><circle cx="529" cy="267" r="0.7" fill="#f2dfc2" opacity="0.38"/><circle cx="284" cy="605" r="0.6" fill="#f2dfc2" opacity="0.85"/><circle cx="359" cy="187" r="0.8" fill="#f2dfc2" opacity="0.79"/><circle cx="606" cy="359" r="0.8" fill="#f2dfc2" opacity="0.40"/><circle cx="436" cy="291" r="0.9" fill="#f2dfc2" opacity="0.85"/><circle cx="698" cy="617" r="0.9" fill="#f2dfc2" opacity="0.69"/><circle cx="672" cy="38" r="1.0" fill="#f2dfc2" opacity="0.53"/><circle cx="598" cy="358" r="0.8" fill="#f2dfc2" opacity="0.87"/><circle cx="512" cy="410" r="0.7" fill="#f2dfc2" opacity="0.83"/><circle cx="536" cy="401" r="1.3" fill="#f2dfc2" opacity="0.45"/><circle cx="608" cy="283" r="0.5" fill="#f2dfc2" opacity="0.43"/><circle cx="560" cy="351" r="0.8" fill="#f2dfc2" opacity="0.55"/><circle cx="396" cy="279" r="0.7" fill="#f2dfc2" opacity="0.41"/><circle cx="367" cy="563" r="0.9" fill="#f2dfc2" opacity="0.76"/><circle cx="387" cy="530" r="1.0" fill="#f2dfc2" opacity="0.40"/><circle cx="536" cy="159" r="0.8" fill="#f2dfc2" opacity="0.47"/><circle cx="501" cy="343" r="1.0" fill="#f2dfc2" opacity="0.41"/><circle cx="528" cy="372" r="0.5" fill="#f2dfc2" opacity="0.82"/><circle cx="608" cy="507" r="0.6" fill="#f2dfc2" opacity="0.82"/><circle cx="546" cy="452" r="1.3" fill="#f2dfc2" opacity="0.87"/><circle cx="583" cy="608" r="0.9" fill="#f2dfc2" opacity="0.41"/><circle cx="681" cy="248" r="0.6" fill="#f2dfc2" opacity="0.88"/><circle cx="373" cy="301" r="0.5" fill="#f2dfc2" opacity="0.43"/><circle cx="655" cy="36" r="0.6" fill="#f2dfc2" opacity="0.38"/><circle cx="300" cy="444" r="0.6" fill="#f2dfc2" opacity="0.60"/><circle cx="338" cy="86" r="0.5" fill="#f2dfc2" opacity="0.69"/><circle cx="701" cy="356" r="1.0" fill="#f2dfc2" opacity="0.83"/><circle cx="361" cy="472" r="0.7" fill="#f2dfc2" opacity="0.79"/><circle cx="636" cy="7" r="0.7" fill="#f2dfc2" opacity="0.42"/><circle cx="460" cy="467" r="0.7" fill="#f2dfc2" opacity="0.75"/><circle cx="301" cy="382" r="0.5" fill="#f2dfc2" opacity="0.55"/><circle cx="438" cy="382" r="0.5" fill="#f2dfc2" opacity="0.86"/><circle cx="606" cy="161" r="0.6" fill="#f2dfc2" opacity="0.73"/><circle cx="290" cy="626" r="0.8" fill="#f2dfc2" opacity="0.41"/><circle cx="290" cy="70" r="1.3" fill="#f2dfc2" opacity="0.49"/><circle cx="353" cy="589" r="1.3" fill="#f2dfc2" opacity="0.73"/><circle cx="464" cy="91" r="0.7" fill="#f2dfc2" opacity="0.65"/><circle cx="613" cy="512" r="0.8" fill="#f2dfc2" opacity="0.36"/><circle cx="445" cy="96" r="0.9" fill="#f2dfc2" opacity="0.62"/><circle cx="295" cy="530" r="0.5" fill="#f2dfc2" opacity="0.45"/><circle cx="675" cy="430" r="0.8" fill="#f2dfc2" opacity="0.81"/><circle cx="747" cy="439" r="0.8" fill="#f2dfc2" opacity="0.57"/><circle cx="702" cy="387" r="0.5" fill="#f2dfc2" opacity="0.55"/><circle cx="535" cy="197" r="0.6" fill="#f2dfc2" opacity="0.67"/><circle cx="301" cy="107" r="0.7" fill="#f2dfc2" opacity="0.75"/><circle cx="440" cy="297" r="0.7" fill="#f2dfc2" opacity="0.52"/><circle cx="442" cy="306" r="0.6" fill="#f2dfc2" opacity="0.36"/><circle cx="502" cy="624" r="0.5" fill="#f2dfc2" opacity="0.70"/><circle cx="631" cy="91" r="0.8" fill="#f2dfc2" opacity="0.50"/><circle cx="522" cy="166" r="0.9" fill="#f2dfc2" opacity="0.67"/><circle cx="562" cy="88" r="1.0" fill="#f2dfc2" opacity="0.37"/><circle cx="551" cy="488" r="1.3" fill="#f2dfc2" opacity="0.46"/><circle cx="486" cy="362" r="0.5" fill="#f2dfc2" opacity="0.55"/><circle cx="416" cy="503" r="1.3" fill="#f2dfc2" opacity="0.79"/><circle cx="348" cy="46" r="1.3" fill="#f2dfc2" opacity="0.54"/><circle cx="455" cy="540" r="0.6" fill="#f2dfc2" opacity="0.54"/><circle cx="546" cy="257" r="0.5" fill="#f2dfc2" opacity="0.74"/><circle cx="604" cy="559" r="1.3" fill="#f2dfc2" opacity="0.61"/><circle cx="457" cy="154" r="0.6" fill="#f2dfc2" opacity="0.90"/><circle cx="353" cy="130" r="1.3" fill="#f2dfc2" opacity="0.72"/><circle cx="476" cy="251" r="1.3" fill="#f2dfc2" opacity="0.52"/><circle cx="362" cy="42" r="0.7" fill="#f2dfc2" opacity="0.75"/><circle cx="402" cy="362" r="1.0" fill="#f2dfc2" opacity="0.87"/><circle cx="444" cy="583" r="0.9" fill="#f2dfc2" opacity="0.86"/><circle cx="563" cy="193" r="0.7" fill="#f2dfc2" opacity="0.89"/><circle cx="452" cy="490" r="0.8" fill="#f2dfc2" opacity="0.75"/><circle cx="725" cy="531" r="0.7" fill="#f2dfc2" opacity="0.84"/><circle cx="413" cy="163" r="0.5" fill="#f2dfc2" opacity="0.77"/><circle cx="583" cy="150" r="0.5" fill="#f2dfc2" opacity="0.47"/><circle cx="473" cy="127" r="0.9" fill="#f2dfc2" opacity="0.51"/><circle cx="522" cy="63" r="0.6" fill="#f2dfc2" opacity="0.75"/><circle cx="745" cy="380" r="0.5" fill="#f2dfc2" opacity="0.39"/><circle cx="674" cy="364" r="1.0" fill="#f2dfc2" opacity="0.43"/><circle cx="371" cy="340" r="0.5" fill="#f2dfc2" opacity="0.70"/><circle cx="726" cy="134" r="0.7" fill="#f2dfc2" opacity="0.83"/><circle cx="293" cy="308" r="0.9" fill="#f2dfc2" opacity="0.72"/><circle cx="443" cy="36" r="0.8" fill="#f2dfc2" opacity="0.79"/><circle cx="322" cy="388" r="1.3" fill="#f2dfc2" opacity="0.62"/><circle cx="569" cy="163" r="0.8" fill="#f2dfc2" opacity="0.83"/><circle cx="292" cy="201" r="1.0" fill="#f2dfc2" opacity="0.89"/><circle cx="307" cy="389" r="1.0" fill="#f2dfc2" opacity="0.81"/><circle cx="356" cy="12" r="0.6" fill="#f2dfc2" opacity="0.43"/><circle cx="651" cy="57" r="1.3" fill="#f2dfc2" opacity="0.55"/><circle cx="446" cy="431" r="1.3" fill="#f2dfc2" opacity="0.66"/><circle cx="598" cy="381" r="0.7" fill="#f2dfc2" opacity="0.48"/><circle cx="579" cy="515" r="0.8" fill="#f2dfc2" opacity="0.77"/><circle cx="655" cy="196" r="1.3" fill="#f2dfc2" opacity="0.65"/><circle cx="621" cy="354" r="0.7" fill="#f2dfc2" opacity="0.64"/><circle cx="734" cy="83" r="0.5" fill="#f2dfc2" opacity="0.66"/><circle cx="328" cy="512" r="0.7" fill="#f2dfc2" opacity="0.43"/><circle cx="584" cy="254" r="0.5" fill="#f2dfc2" opacity="0.87"/><circle cx="582" cy="77" r="0.9" fill="#f2dfc2" opacity="0.63"/><circle cx="548" cy="115" r="0.9" fill="#f2dfc2" opacity="0.55"/><circle cx="352" cy="112" r="1.0" fill="#f2dfc2" opacity="0.82"/><circle cx="656" cy="335" r="0.7" fill="#f2dfc2" opacity="0.78"/><circle cx="397" cy="622" r="0.8" fill="#f2dfc2" opacity="0.47"/><circle cx="721" cy="570" r="0.8" fill="#f2dfc2" opacity="0.60"/><circle cx="436" cy="572" r="0.5" fill="#f2dfc2" opacity="0.71"/><circle cx="287" cy="511" r="0.8" fill="#f2dfc2" opacity="0.72"/><circle cx="495" cy="183" r="2.2" fill="#fff2dc" opacity=".85" filter="url(#b1)"/><circle cx="505" cy="579" r="2.2" fill="#fff2dc" opacity=".85" filter="url(#b1)"/><circle cx="505" cy="433" r="2.2" fill="#fff2dc" opacity=".85" filter="url(#b1)"/><circle cx="705" cy="68" r="2.2" fill="#fff2dc" opacity=".85" filter="url(#b1)"/><circle cx="359" cy="464" r="2.2" fill="#fff2dc" opacity=".85" filter="url(#b1)"/><circle cx="450" cy="257" r="2.2" fill="#fff2dc" opacity=".85" filter="url(#b1)"/><circle cx="485" cy="298" r="2.2" fill="#fff2dc" opacity=".85" filter="url(#b1)"/><circle cx="465" cy="563" r="2.2" fill="#fff2dc" opacity=".85" filter="url(#b1)"/><circle cx="556" cy="622" r="2.2" fill="#fff2dc" opacity=".85" filter="url(#b1)"/><circle cx="677" cy="328" r="2.2" fill="#fff2dc" opacity=".85" filter="url(#b1)"/><circle cx="736" cy="498" r="2.2" fill="#fff2dc" opacity=".85" filter="url(#b1)"/><circle cx="744" cy="130" r="2.2" fill="#fff2dc" opacity=".85" filter="url(#b1)"/><circle cx="474" cy="102" r="2.2" fill="#fff2dc" opacity=".85" filter="url(#b1)"/><circle cx="352" cy="558" r="2.2" fill="#fff2dc" opacity=".85" filter="url(#b1)"/><circle cx="453" cy="236" r="2.2" fill="#fff2dc" opacity=".85" filter="url(#b1)"/><circle cx="602" cy="608" r="2.2" fill="#fff2dc" opacity=".85" filter="url(#b1)"/><circle cx="438" cy="80" r="2.2" fill="#fff2dc" opacity=".85" filter="url(#b1)"/><circle cx="673" cy="546" r="2.2" fill="#fff2dc" opacity=".85" filter="url(#b1)"/><circle cx="654" cy="77" r="2.2" fill="#fff2dc" opacity=".85" filter="url(#b1)"/><circle cx="670" cy="306" r="2.2" fill="#fff2dc" opacity=".85" filter="url(#b1)"/><circle cx="530" cy="132" r="2.2" fill="#fff2dc" opacity=".85" filter="url(#b1)"/><circle cx="737" cy="449" r="2.2" fill="#fff2dc" opacity=".85" filter="url(#b1)"/><circle cx="682" cy="139" r="2.2" fill="#fff2dc" opacity=".85" filter="url(#b1)"/><circle cx="727" cy="128" r="2.2" fill="#fff2dc" opacity=".85" filter="url(#b1)"/><circle cx="475" cy="343" r="2.2" fill="#fff2dc" opacity=".85" filter="url(#b1)"/></svg>
  <!-- haze -->
  <div class="a" style="left:1040px;top:1340px;width:460px;height:110px;background:linear-gradient(90deg,rgba(200,205,240,0) 0%,rgba(200,205,240,.35) 35%,rgba(196,202,238,.75) 80%,rgba(190,196,236,.85) 100%);filter:blur(10px)"></div>
  <div class="a" style="left:1040px;top:1186px;width:423px;height:66px;background:linear-gradient(90deg,rgba(253,253,255,0) 0%,rgba(253,253,255,.55) 35%,rgba(252,252,255,.95) 65%,rgba(250,250,255,.97) 100%);-webkit-mask-image:linear-gradient(180deg,transparent 0%,#000 45%);mask-image:linear-gradient(180deg,transparent 0%,#000 45%)"></div>
  <!-- image 2 -->
  <svg class="ic" style="left:1463px;top:1191px;overflow:hidden" width="763" height="259" viewBox="0 0 763 259"><rect width="763" height="259" fill="#7a4a2c"/><rect width="763" height="259" filter="url(#tex)"/><rect width="763" height="259" filter="url(#tex2)"/><rect width="763" height="259" filter="url(#tex3)"/><rect width="763" height="259" fill="#3a1e0c" opacity=".2"/><rect width="14" height="259" fill="#2a180e" opacity=".7" filter="url(#b4)"/><rect x="735" width="40" height="80" fill="#1e120a" opacity=".7" filter="url(#b4)"/><g filter="url(#rough)"><path d="M89.4 -5.0 C90.3 -3.0 93.6 2.8 95.0 6.7 C96.4 10.6 96.8 14.4 97.9 18.3 C99.0 22.2 100.2 25.6 101.6 30.0 C103.0 34.5 104.6 40.0 106.3 45.0 C108.0 50.0 110.3 55.0 111.9 60.0 C113.5 65.0 115.3 72.5 116 75" stroke="#1a0e08" stroke-width="3.0" stroke-opacity="0.7" fill="none" stroke-linecap="round" filter="url(#b1)"/><path d="M196.7 -5.0 C197.2 -3.0 198.5 2.8 199.6 6.7 C200.7 10.6 201.6 14.4 203.3 18.3 C205.0 22.2 208.0 25.6 209.6 30.0 C211.2 34.5 211.9 40.0 213.0 45.0 C214.1 50.0 214.6 55.0 216.1 60.0 C217.6 65.0 221.0 72.5 222 75" stroke="#1a0e08" stroke-width="9.0" stroke-opacity="0.9" fill="none" stroke-linecap="round" filter="url(#b1)"/><path d="M246.5 -5.0 C246.8 -3.0 247.1 2.8 248.1 6.7 C249.1 10.6 250.8 14.4 252.5 18.3 C254.2 22.2 256.6 25.6 258.4 30.0 C260.1 34.5 261.4 40.0 263.0 45.0 C264.6 50.0 266.6 55.0 268.1 60.0 C269.6 65.0 271.4 72.5 272 75" stroke="#1a0e08" stroke-width="6.0" stroke-opacity="0.85" fill="none" stroke-linecap="round" filter="url(#b1)"/><path d="M376.9 -5.0 C377.1 -3.0 376.8 2.8 378.2 6.7 C379.6 10.6 384.2 14.4 385.6 18.3 C387.0 22.2 385.4 25.6 386.3 30.0 C387.2 34.5 389.0 40.0 391.1 45.0 C393.2 50.0 397.4 55.0 399.2 60.0 C401.0 65.0 401.5 72.5 402 75" stroke="#1a0e08" stroke-width="3.0" stroke-opacity="0.6" fill="none" stroke-linecap="round" filter="url(#b1)"/><path d="M437.9 -5.0 C438.3 -3.0 439.4 2.8 440.1 6.7 C440.8 10.6 440.9 14.4 442.0 18.3 C443.1 22.2 445.1 25.6 446.9 30.0 C448.7 34.5 451.0 40.0 452.8 45.0 C454.6 50.0 456.4 55.0 457.9 60.0 C459.4 65.0 461.3 72.5 462 75" stroke="#1a0e08" stroke-width="10.0" stroke-opacity="0.9" fill="none" stroke-linecap="round" filter="url(#b1)"/><path d="M468.2 -5.0 C469.2 -3.0 472.7 2.8 474.0 6.7 C475.3 10.6 474.9 14.4 476.1 18.3 C477.3 22.2 479.7 25.6 481.4 30.0 C483.1 34.5 485.5 40.0 486.5 45.0 C487.5 50.0 486.4 55.0 487.6 60.0 C488.9 65.0 492.9 72.5 494 75" stroke="#1a0e08" stroke-width="6.0" stroke-opacity="0.8" fill="none" stroke-linecap="round" filter="url(#b1)"/><path d="M517.9 -5.0 C518.5 -3.0 520.1 2.8 521.4 6.7 C522.7 10.6 525.0 14.4 525.9 18.3 C526.8 22.2 526.0 25.6 526.9 30.0 C527.8 34.5 529.1 40.0 531.0 45.0 C532.9 50.0 536.3 55.0 538.1 60.0 C539.9 65.0 541.4 72.5 542 75" stroke="#1a0e08" stroke-width="5.0" stroke-opacity="0.75" fill="none" stroke-linecap="round" filter="url(#b1)"/><path d="M584.1 -5.0 C584.9 -3.0 587.1 2.8 589.1 6.7 C591.1 10.6 594.6 14.4 595.9 18.3 C597.2 22.2 596.0 25.6 596.8 30.0 C597.6 34.5 598.9 40.0 600.9 45.0 C602.9 50.0 606.6 55.0 608.5 60.0 C610.4 65.0 611.4 72.5 612 75" stroke="#1a0e08" stroke-width="4.0" stroke-opacity="0.7" fill="none" stroke-linecap="round" filter="url(#b1)"/><path d="M647.8 -5.0 C648.0 -3.0 648.2 2.8 649.1 6.7 C650.0 10.6 652.1 14.4 653.3 18.3 C654.5 22.2 654.7 25.6 656.2 30.0 C657.7 34.5 660.8 40.0 662.5 45.0 C664.2 50.0 664.9 55.0 666.5 60.0 C668.1 65.0 671.1 72.5 672 75" stroke="#1a0e08" stroke-width="6.0" stroke-opacity="0.8" fill="none" stroke-linecap="round" filter="url(#b1)"/><path d="M713.3 -5.0 C714.0 -3.0 715.8 2.8 717.6 6.7 C719.4 10.6 722.4 14.4 724.0 18.3 C725.6 22.2 726.0 25.6 727.0 30.0 C728.0 34.5 728.4 40.0 729.7 45.0 C731.0 50.0 733.3 55.0 735.0 60.0 C736.7 65.0 739.2 72.5 740 75" stroke="#1a0e08" stroke-width="8.0" stroke-opacity="0.85" fill="none" stroke-linecap="round" filter="url(#b1)"/><path d="M744.2 -5.0 C744.8 -3.0 746.4 2.8 747.5 6.7 C748.6 10.6 749.0 14.4 750.6 18.3 C752.2 22.2 755.1 25.6 757.0 30.0 C758.9 34.5 760.6 40.0 762.2 45.0 C763.8 50.0 765.2 55.0 766.5 60.0 C767.8 65.0 769.4 72.5 770 75" stroke="#1a0e08" stroke-width="6.0" stroke-opacity="0.8" fill="none" stroke-linecap="round" filter="url(#b1)"/><path d="M161.6 150.0 C162.2 152.8 164.3 161.1 165.5 166.7 C166.7 172.2 167.4 177.8 169.0 183.3 C170.6 188.9 172.8 193.6 175.0 200.0 C177.2 206.4 180.2 214.5 182.0 221.7 C183.8 228.9 184.5 236.1 185.8 243.3 C187.1 250.5 189.3 261.4 190 265" stroke="#1a0e08" stroke-width="6.0" stroke-opacity="0.85" fill="none" stroke-linecap="round" filter="url(#b1)"/><path d="M226.9 150.0 C227.9 152.8 231.3 161.1 233.0 166.7 C234.7 172.2 235.9 177.8 237.3 183.3 C238.8 188.9 240.5 193.6 241.7 200.0 C242.9 206.4 242.7 214.5 244.3 221.7 C245.9 228.9 249.6 236.1 251.5 243.3 C253.4 250.5 255.2 261.4 256 265" stroke="#1a0e08" stroke-width="4.0" stroke-opacity="0.7" fill="none" stroke-linecap="round" filter="url(#b1)"/><path d="M288.1 150.0 C289.4 152.8 294.0 161.1 295.9 166.7 C297.8 172.2 298.1 177.8 299.6 183.3 C301.2 188.9 303.4 193.6 305.2 200.0 C307.0 206.4 309.1 214.5 310.7 221.7 C312.3 228.9 313.2 236.1 314.8 243.3 C316.4 250.5 319.1 261.4 320 265" stroke="#1a0e08" stroke-width="3.0" stroke-opacity="0.6" fill="none" stroke-linecap="round" filter="url(#b1)"/><path d="M410.7 150.0 C411.4 152.8 413.2 161.1 414.8 166.7 C416.4 172.2 418.6 177.8 420.3 183.3 C422.0 188.9 423.2 193.6 424.9 200.0 C426.6 206.4 428.9 214.5 430.6 221.7 C432.3 228.9 433.3 236.1 434.9 243.3 C436.5 250.5 439.1 261.4 440 265" stroke="#1a0e08" stroke-width="4.0" stroke-opacity="0.7" fill="none" stroke-linecap="round" filter="url(#b1)"/><path d="M464.4 150.0 C465.4 152.8 468.5 161.1 470.2 166.7 C471.9 172.2 472.6 177.8 474.5 183.3 C476.4 188.9 479.4 193.6 481.3 200.0 C483.2 206.4 484.5 214.5 486.2 221.7 C487.9 228.9 490.0 236.1 491.5 243.3 C493.0 250.5 494.4 261.4 495 265" stroke="#1a0e08" stroke-width="9.0" stroke-opacity="0.9" fill="none" stroke-linecap="round" filter="url(#b1)"/><path d="M494.4 150.0 C495.0 152.8 496.2 161.1 498.3 166.7 C500.4 172.2 505.1 177.8 506.9 183.3 C508.7 188.9 507.7 193.6 509.1 200.0 C510.6 206.4 513.6 214.5 515.6 221.7 C517.6 228.9 519.7 236.1 521.3 243.3 C522.9 250.5 524.4 261.4 525 265" stroke="#1a0e08" stroke-width="6.0" stroke-opacity="0.8" fill="none" stroke-linecap="round" filter="url(#b1)"/><path d="M553.3 150.0 C554.6 152.8 559.1 161.1 561.2 166.7 C563.3 172.2 564.0 177.8 565.7 183.3 C567.5 188.9 570.0 193.6 571.7 200.0 C573.4 206.4 574.9 214.5 576.1 221.7 C577.3 228.9 577.5 236.1 579.0 243.3 C580.5 250.5 584.0 261.4 585 265" stroke="#1a0e08" stroke-width="5.0" stroke-opacity="0.8" fill="none" stroke-linecap="round" filter="url(#b1)"/><path d="M631.4 150.0 C632.2 152.8 635.1 161.1 636.4 166.7 C637.7 172.2 637.9 177.8 639.4 183.3 C640.9 188.9 643.6 193.6 645.4 200.0 C647.2 206.4 648.4 214.5 650.3 221.7 C652.2 228.9 655.4 236.1 657.0 243.3 C658.6 250.5 659.5 261.4 660 265" stroke="#1a0e08" stroke-width="4.0" stroke-opacity="0.7" fill="none" stroke-linecap="round" filter="url(#b1)"/><path d="M658.3 150.0 C659.6 152.8 664.1 161.1 666.0 166.7 C667.9 172.2 668.2 177.8 669.5 183.3 C670.8 188.9 672.3 193.6 673.8 200.0 C675.3 206.4 676.9 214.5 678.7 221.7 C680.5 228.9 682.6 236.1 684.5 243.3 C686.4 250.5 689.1 261.4 690 265" stroke="#1a0e08" stroke-width="8.0" stroke-opacity="0.9" fill="none" stroke-linecap="round" filter="url(#b1)"/><path d="M690.7 150.0 C691.2 152.8 692.0 161.1 693.6 166.7 C695.2 172.2 698.9 177.8 700.6 183.3 C702.3 188.9 701.8 193.6 703.7 200.0 C705.6 206.4 709.7 214.5 711.8 221.7 C713.9 228.9 715.0 236.1 716.4 243.3 C717.8 250.5 719.4 261.4 720 265" stroke="#1a0e08" stroke-width="5.0" stroke-opacity="0.75" fill="none" stroke-linecap="round" filter="url(#b1)"/></g><rect width="763" height="259" filter="url(#spk)" mask="url(#spkm)" opacity=".8"/></svg>

  <!-- note panel -->
  <div class="a" style="left:1246px;top:393.5px;width:685px;height:658.5px;border-radius:13px;background:#d9dcfc;box-shadow:0 4px 10px rgba(30,30,60,.2),0 0 3px rgba(30,30,60,.1)">
    <svg class="ic" style="left:0;top:0" width="80" height="80" viewBox="1246 393.5 80 80" fill="none" stroke="#2d2396" stroke-width="1.8">
      <path d="M1285.5 439.5 L1304.5 458.5 M1304.5 439.5 L1285.5 458.5"/>
    </svg>
    <div class="t" style="left:38px;top:98px;font-size:40px;font-weight:700;color:#23178f;letter-spacing:1.2px">Note</div>
    <div class="a" style="left:15.5px;top:161.2px;width:654.5px;height:145.3px;border-radius:11px;background:#fff"></div>
    <div class="a" style="left:15.5px;top:321.5px;width:654.5px;height:146.5px;border-radius:11px;background:#fff"></div>
    <div class="a" style="left:27.7px;top:498.5px;width:630.3px;height:52.6px;border-radius:11px;background:#b2bbf3"></div>
  </div>
  <div class="t" style="left:1284px;top:578px;font-size:19px;font-weight:700;color:#23178f">Olivia</div>
  <div class="t" style="left:1284.5px;top:607.7px;font-size:14.5px;color:#8a8a8e">Today at 10:12</div>
  <div class="t" style="left:1285px;top:637.5px;font-size:18.5px;color:#111;letter-spacing:0.5px">Nice work!</div>
  <div class="t" style="left:1285px;top:659.6px;font-size:18.5px;color:#111;letter-spacing:0.5px">Should we make the title more prominent?</div>
  <div class="t" style="left:1284px;top:738.5px;font-size:19px;font-weight:700;color:#23178f">George</div>
  <div class="t" style="left:1284.5px;top:771.1px;font-size:14.5px;color:#8a8a8e">Today at 11:28</div>
  <div class="t" style="left:1285px;top:799.3px;font-size:18.5px;color:#111;letter-spacing:0.3px">Yes, that’s a good idea.</div>
  <div class="t" style="left:1285px;top:821.8px;font-size:18.5px;color:#111;letter-spacing:0.75px">I will highlight it more.</div>
  <div class="t" style="left:1487px;top:909.9px;font-size:20px;font-weight:700;color:#23178f;letter-spacing:0.45px">Add your comment...</div>
  <svg class="ic" style="left:0;top:0" width="2564" height="1504" viewBox="0 0 2564 1504" fill="none" stroke="#2d2396" stroke-width="1.7" stroke-linecap="round" stroke-linejoin="round">
    <rect x="1284.8" y="1000.5" width="8.4" height="3.2" rx="1.6"/>
    <path d="M1279 1007.3 L1279.8 1005.2 A2 2 0 0 1 1281.6 1003.8 L1296.4 1003.8 A2 2 0 0 1 1298.2 1005.2 L1299 1007.3 Z"/>
    <path d="M1280.4 1007.4 L1281.8 1021.3 A2 2 0 0 0 1283.8 1023.2 L1293.8 1023.2 A2 2 0 0 0 1295.8 1021.3 L1297.4 1007.4"/>
    <path d="M1284.4 1011 L1284.9 1020 M1289 1011 L1289 1020 M1293.7 1011 L1293.2 1020" stroke="#5048a8" stroke-width="1.9"/>
    <path d="M1880.9 1009 L1883.6 1006.4 L1891.4 1014.2 L1888.9 1016.8 A1.3 1.3 0 0 1 1887.1 1016.8 L1880.9 1010.8 A1.3 1.3 0 0 1 1880.9 1009 Z"/>
    <path d="M1883.6 1006.4 L1888.2 999.9 L1892.3 1004.4 L1889.8 1006.4 L1894.1 1006.2 L1899.2 1011.5 L1898.4 1013.8 L1891.4 1014.2"/>
    <path d="M1894.1 1006.2 L1899.2 1011.5 L1898.4 1013.8 L1893 1014 Z" fill="rgba(60,50,170,.25)" stroke="none"/>
    <path d="M1882.9 1013 L1877.8 1017.4 A2.5 2.5 0 0 0 1881.6 1021 L1884.9 1016.1"/>
    <path d="M1898.5 1018.3 C1897.3 1020 1896.9 1021 1896.9 1022 A1.6 1.6 0 0 0 1900.1 1022 C1900.1 1021 1899.7 1020 1898.5 1018.3 Z" fill="#3b33a0" stroke="none"/>
  </svg>

  <div class="a" style="left:1244px;top:1397px;width:687px;height:53px;border-radius:13px 13px 0 0;background:linear-gradient(180deg,rgba(160,168,230,.45) 0%,rgba(160,168,230,.12) 100%),linear-gradient(90deg,#e2e3f9 0%,#d4d6f6 25%,#cdd0f4 60%,#c8ccf2 100%)"></div>
  <svg class="ic" style="left:0;top:0" width="2564" height="1504" viewBox="0 0 2564 1504" fill="none" stroke="#4a40b0" stroke-width="1.6">
    <path d="M1286 1442 L1295 1450 L1304 1442"/>
  </svg>
  <!-- dark toolbar -->
  <div class="a" style="left:1000px;top:1252px;width:1226px;height:100px;background:linear-gradient(90deg,rgba(36,38,43,0) 0px,rgba(36,38,43,.08) 40px,rgba(36,38,43,.235) 119px,rgba(36,38,43,.39) 178px,rgba(36,38,43,.55) 238px,rgba(36,38,43,.70) 317px,rgba(36,38,43,.94) 387px,#24262b 436px)"></div>
  <div class="a" style="left:1010px;top:1349px;width:380px;height:9px;background:linear-gradient(90deg,rgba(36,38,43,0) 0px,rgba(36,38,43,.05) 60px,rgba(36,38,43,.16) 200px,rgba(36,38,43,.18) 300px,rgba(36,38,43,0) 380px);filter:blur(3px)"></div>
  <div class="a" style="left:1676px;top:1252px;width:103px;height:102.5px;background:#5038de"></div>

  <svg class="ic" style="left:0;top:0" width="2564" height="1504" viewBox="0 0 2564 1504" fill="none" stroke-linecap="round" stroke-linejoin="round">
    <!-- faded select icon -->
    <path d="M1027 1281.5 L1039 1281.5 L1039 1324 L1027 1324" stroke="rgba(255,255,255,.55)" stroke-width="1.6"/>
    <!-- pen -->
    <path d="M1204.4 1288 L1222.8 1304.6" stroke="rgba(230,230,235,.35)" stroke-width="6" stroke-linecap="butt"/>
    <path d="M1192.5 1313.5 L1199 1319.5" stroke="rgba(230,230,235,.35)" stroke-width="5" stroke-linecap="butt"/>
    <path d="M1207.2 1282.1 C1200 1289 1195.5 1297 1195 1307.4 L1191 1311.5 C1189.8 1312.8 1189.8 1314.5 1191 1315.8 L1195.5 1320 C1196.8 1321.2 1198.5 1321.2 1199.8 1320 L1203 1316.5 C1213 1314 1221 1310 1228.5 1303.2" stroke="#f2f2f4" stroke-width="1.6"/>
    <path d="M1187.5 1322.5 L1192 1318.3" stroke="#d8d8dc" stroke-width="4"/>
    <path d="M1249.8 1299.1 L1271.6 1299.1 L1260.7 1311.9 Z" fill="#cfd0d4"/>
    <!-- signature -->
    <path d="M1332 1315.1 L1379.8 1315.1 M1333 1301.3 L1339 1307.5 M1339 1301.3 L1333 1307.5" stroke="#f2f2f4" stroke-width="1.9" stroke-linecap="butt"/>
    <path d="M1330.7 1293.7 C1340 1288.5 1350 1283.5 1356.5 1281.5 C1359 1280.8 1360.8 1282.5 1360.5 1286 C1360 1295 1358.5 1305 1356 1315 C1354 1322 1351.5 1328 1349 1328 C1345.5 1328 1344 1323.5 1344.2 1319 C1344.5 1313 1348 1306 1355 1300 C1359 1296.5 1364 1292.5 1366.5 1291.5 C1368.5 1291 1369.5 1294 1370 1298 C1370.5 1302 1371.5 1304 1373 1302 C1375 1299 1377 1292 1378 1286.5" stroke="#c9cacf" stroke-width="2.5"/>
    <!-- image -->
    <rect x="1445.3" y="1285.9" width="43.6" height="34.7" rx="4" stroke="#eeeef2" stroke-width="2.4"/>
    <circle cx="1455.9" cy="1296.3" r="4" fill="#e2e2e6"/>
    <path d="M1466.4 1316.9 L1477.6 1301.7 L1486 1309.3 L1486 1316.9 Z" fill="#8b8c92"/>
    <path d="M1450.8 1316.9 L1460.4 1307.9 L1470 1316.9 Z" fill="#dcdce2"/>
    <path d="M1509.3 1298.8 L1532 1298.8 L1520.4 1311.1 Z" fill="#9d9ea3"/>
    <!-- comment -->
    <path d="M1595 1281.3 L1636.5 1281.3 A3.5 3.5 0 0 1 1640 1284.8 L1640 1310.1 A3.5 3.5 0 0 1 1636.5 1313.6 L1626 1313.6 L1615.7 1326.5 L1605.5 1313.6 L1595 1313.6 A3.5 3.5 0 0 1 1591.5 1310.1 L1591.5 1284.8 A3.5 3.5 0 0 1 1595 1281.3 Z" stroke="#f0f0f3" stroke-width="2.4" stroke-linejoin="miter"/>
    <path d="M1597 1290.4 L1634.9 1290.4 M1597 1295.4 L1634.9 1295.4 M1597 1299.5 L1634.9 1299.5 M1597 1304.4 L1622.9 1304.4" stroke="#8e9096" stroke-width="2.8" stroke-linecap="butt"/>
    <!-- text box -->
    <rect x="1707.4" y="1283.8" width="39.3" height="39.4" stroke="#b4aaff" stroke-width="2.2"/>
    <circle cx="1707.4" cy="1283.8" r="4.8" fill="#fff"/>
    <circle cx="1746.7" cy="1283.8" r="4.8" fill="#fff"/>
    <circle cx="1707.4" cy="1323.2" r="4.8" fill="#fff"/>
    <circle cx="1746.7" cy="1323.2" r="4.8" fill="#fff"/>
    <path d="M1716.5 1294 L1737.5 1294 L1737.5 1299.5 L1735.5 1299.5 L1734.5 1297.5 L1730 1297.5 L1730 1310 L1732.5 1310 L1732.5 1312.6 L1722.5 1312.6 L1722.5 1310 L1724 1310 L1724 1297.5 L1719.5 1297.5 L1718.5 1299.5 L1716.5 1299.5 Z" fill="#a89ef5"/>
    <!-- circle shape -->
    <circle cx="1838.3" cy="1303.3" r="22" stroke="#9a9ba0" stroke-width="2.5"/>
    <g fill="#dfe0e4" stroke="#24262b" stroke-width="1.5">
      <circle cx="1838.3" cy="1281.3" r="4.6"/>
      <circle cx="1838.3" cy="1325.3" r="4.6"/>
      <circle cx="1816.3" cy="1303.3" r="4.6"/>
      <circle cx="1860.3" cy="1303.3" r="4.6"/>
    </g>
    <path d="M1880.4 1298.8 L1903.2 1298.8 L1891.7 1311.3 Z" fill="#a0a1a6"/>
    <!-- pages -->
    <path d="M1993.5 1298.8 L1998.5 1298.8 A3 3 0 0 1 2001.5 1301.8 L2001.5 1323 L1979 1323" stroke="#8e9096" stroke-width="1.8" stroke-dasharray="3.5 3" stroke-linecap="butt"/>
    <path d="M1970 1309.5 L1995 1309.5 L1995 1316.5 L1979 1316.5 L1970 1316.5 Z" fill="#5d5f66"/>
    <path d="M1963.3 1292.8 L1978.5 1292.8 L1978.5 1323 L1958 1323 A2.5 2.5 0 0 1 1955.5 1320.5 L1955.5 1300.5 Z" fill="#24262b" stroke="#eeeef2" stroke-width="2"/>
    <path d="M1956.5 1300 L1963 1293.5 L1963 1300 Z" fill="#8e9096"/>
    <path d="M1970 1279 L1983.5 1279 L1992.3 1287.5 L1992.3 1306.5 A2.5 2.5 0 0 1 1989.8 1309 L1970 1309" fill="#24262b" stroke="#eeeef2" stroke-width="2"/>
    <path d="M1970 1279 L1971.5 1281 L1969 1283 L1971.5 1285 L1969 1287 L1971.5 1289 L1969 1291 L1971.5 1293 L1969 1295 L1971.5 1297 L1969 1299 L1971.5 1301 L1969 1303 L1971.5 1305 L1969 1307 L1970 1309" stroke="#eeeef2" stroke-width="1.4"/>
    <path d="M1984 1280 L1991.5 1287.3 L1984 1287.3 Z" fill="#8e9096"/>
    <!-- printer -->
    <path d="M2064.7 1309.6 L2113.3 1309.6 L2113.3 1317 A3.8 3.8 0 0 1 2109.5 1320.8 L2068.5 1320.8 A3.8 3.8 0 0 1 2064.7 1317 Z" fill="#5b5d64"/>
    <path d="M2072.4 1293 L2072.4 1280.3 L2098.9 1280.3 L2098.9 1293" stroke="#eeeef2" stroke-width="2" stroke-linecap="butt" stroke-linejoin="miter"/>
    <path d="M2074 1293 L2068.5 1293 A4 4 0 0 0 2064.7 1297 L2064.7 1317 A4 4 0 0 0 2068.5 1320.8 L2073 1320.8 M2104 1320.8 L2109.5 1320.8 A4 4 0 0 0 2113.3 1317 L2113.3 1297 A4 4 0 0 0 2109.5 1293 L2104 1293 L2104 1298.6 L2074 1298.6 L2074 1293" stroke="#eeeef2" stroke-width="2" stroke-linejoin="miter"/>
    <path d="M2072 1312 L2072 1320.8 L2100 1320.8 L2100 1312 M2072 1315.8 L2100 1315.8 M2100 1316 L2104 1316 L2104 1321" stroke="#eeeef2" stroke-width="1.8" stroke-linecap="butt"/>
    <circle cx="2106.4" cy="1304.6" r="2.4" fill="#8e9096"/>
    <!-- search -->
    <circle cx="2195.4" cy="1298.2" r="12.9" stroke="#f0f0f3" stroke-width="2.3"/>
    <path d="M2206 1309.8 L2216.5 1319.4" stroke="#b8b9be" stroke-width="4"/>
  </svg>
  <!-- black bottom bar -->
  <div class="a" style="left:1422px;top:1491px;width:702px;height:20px;border-radius:14px 14px 0 0;background:#202226"></div>
  <!-- logo -->
  <svg class="ic" style="left:0;top:0" width="700" height="560" viewBox="0 0 700 560">
    <path fill="#6b5fe1" d="M541 425 C530 412 516 398 515 384 C514 372 524 363 536 363 C549 363 557 372 557 385 C557 396 553 404 554 415 C555 430 560 440 566 447 Z"/>
    <path fill="#6b5fe1" d="M541 425 C533 443 520 455 502 461 C488 465 481 475 481 486 C481 498 491 505 501 505 C514 505 521 496 526 485 C530 476 532 468 535 457.5 Z"/>
    <path fill="#6b5fe1" d="M566 447 C579 443 592 441 603 442 C617 443 626 452 626 463 C626 476 616 483 605 483 C594 483 585 474 578 467 C570 460 560 456 535 457.5 Z"/>
    <path fill="#2b1b9b" d="M541 425 L566 447 L535 457.5 Z"/>
  </svg>
  <!-- eval text -->
  <div class="t" style="left:412.5px;top:315.5px;font-size:65.2px;font-weight:700;color:#db3021">For Evaluation Purposes Only (remove with TRIAL key)</div>

  <svg class="ic" style="left:0;top:0" width="2564" height="1504" viewBox="0 0 2564 1504">
    <path d="M2549 157.5 L2557.5 170 L2540.5 170 Z" fill="#8a8a8a" stroke="#8a8a8a" stroke-width="1.5" stroke-linejoin="round"/>
    <rect x="2540" y="184" width="18" height="60" rx="9" fill="#8a8a8a"/>
    <path d="M2549 1490.5 L2557.5 1478 L2540.5 1478 Z" fill="#8a8a8a" stroke="#8a8a8a" stroke-width="1.5" stroke-linejoin="round"/>
  </svg>
  <div id="title">
    <div class="a" style="left:20px;top:22px;width:31px;height:25px;background:#eef0f0;border:1px solid #9a9ea2;box-shadow:inset 0 0 0 1px #fff"></div>
    <div class="a" style="left:22px;top:26px;width:16px;height:19px;background:linear-gradient(160deg,#3f8fa8,#4aa870 80%)"></div>
    <div class="a" style="left:40px;top:27px;width:4px;height:1px;background:#9aa;box-shadow:0 3px 0 #9aa,0 6px 0 #9aa,0 9px 0 #9aa,0 12px 0 #9aa,0 15px 0 #9aa"></div>
    <div class="a" style="left:46px;top:25px;width:2px;height:13px;background:linear-gradient(#3a7fb0,#7cc0a0)"></div>
    <div class="t" style="left:57px;top:16.7px;font-size:24px;color:#111">WinUI Desktop</div>
  </div>
  <div id="tb"><div class="sep" style="left:551.5px"></div><div class="sep" style="left:645.5px"></div><div class="sep" style="left:739.5px"></div><div class="sep" style="left:832.5px"></div><div class="sep" style="left:927.5px"></div><div class="sep" style="left:1433.5px"></div><div class="sep" style="left:1565.5px"></div><div class="sep" style="left:1660.5px"></div><div class="sep" style="left:1792.5px"></div><div class="sep" style="left:1886.0px"></div><div class="sep" style="left:2018.0px"></div><div class="sep" style="left:2150.5px"></div><div class="sep" style="left:2245.5px"></div><div class="sep" style="left:2376.5px"></div><div class="sep" style="left:2470.5px"></div>
    <div class="a" style="left:237px;top:18px;width:204px;height:52px;border-radius:9px;background:#d6d7da;overflow:hidden">
      <div class="a" style="left:52px;top:0;width:2px;height:52px;background:#fcfdfe"></div>
      <div class="a" style="left:150px;top:0;width:2px;height:52px;background:#fcfdfe"></div>
    </div>
    <div class="t" style="left:159.5px;top:31.8px;font-size:27px;color:#3b3e45;letter-spacing:-0.4px">Page</div>
    
    <div class="t" style="left:458.3px;top:32.8px;font-size:26.5px;color:#3b3e45;letter-spacing:0.8px">of</div>
    <div class="a" style="left:1250px;top:0;width:60px;height:26px;background:#1e1e1e;border:2px solid #5e5e5e"></div>
    <div class="a" style="left:1260px;top:9px;width:40px;height:2px;background:#777;box-shadow:0 4px 0 #777"></div>
  </div>
<svg class="ic" style="left:0;top:0;z-index:6" width="2564" height="160" viewBox="0 0 2564 160" fill="none" stroke="#3b3e45" stroke-width="2.7" stroke-linecap="round" stroke-linejoin="round">
  <!-- window controls -->
  <g stroke="#111" stroke-width="1.4" stroke-linecap="butt">
    <line x1="2324" y1="30" x2="2344" y2="30"/>
    <rect x="2416.7" y="22.7" width="18.6" height="17.6" rx="2.5"/>
    <path d="M2508.5 21.5 L2528 41 M2528 21.5 L2508.5 41"/>
  </g>
  <!-- grid -->
  <rect x="27.8" y="89.7" width="9.5" height="9.8" rx="1"/>
  <rect x="46.4" y="89.7" width="9.5" height="9.8" rx="1"/>
  <rect x="27.8" y="108.1" width="9.5" height="9.8" rx="1"/>
  <rect x="46.4" y="108.1" width="9.5" height="9.8" rx="1"/>
  <g stroke="#5d6066" stroke-width="2.6">
    <polyline points="101.5,100.5 107.8,106.8 114,100.5"/>
    <polyline points="1538,101 1544.5,107.5 1551,101"/>
    <polyline points="1763.2,101 1770,107.7 1776.5,101"/>
    <polyline points="1990,101 1996.5,107.5 2003,101"/>
    <polyline points="2122,101 2128.5,107.5 2135,101"/>
    <polyline points="2347,101 2353.5,107.5 2360,101"/>
  </g>
  <!-- page nav chevrons -->
  <polyline points="264,97.5 258,104.3 264,111" stroke="#9b9da1" stroke-width="2.6"/>
  <polyline points="409.5,97.5 415.5,104.3 409.5,111" stroke="#3b3e45" stroke-width="2.9"/>
  <path d="M334.3 99.6 L340.2 94.4 M340.5 93 L340.5 112.8" stroke="#3b3e45" stroke-width="2.6" stroke-linecap="butt" stroke-linejoin="miter"/>
  <path d="M494.2 99.8 L499.6 96 M499.9 95.2 L499.9 114.8 M509.3 99.8 L514.7 96 M515 95.2 L515 114.8" stroke="#3b3e45" stroke-width="2.3" stroke-linecap="butt" stroke-linejoin="miter"/>
  <!-- dashed select -->
  <rect x="582.5" y="87.5" width="33.5" height="33.5" rx="1.5" stroke-dasharray="5.5 4.4" stroke-dashoffset="2.5" stroke-linecap="butt" stroke-width="2.9"/>
  <!-- hand -->
  <path d="M683.9 107.5 L683.9 92.5 A3.05 3.05 0 0 1 690 92.5 L690 102.3 M690 90 L690 87.2 A3 3 0 0 1 696 87.2 L696 102.3 M696 90 L696 89.2 A2.9 2.9 0 0 1 701.8 89.2 L701.8 102.3 M701.8 95.5 A3.2 3.2 0 0 1 708.2 95.5 L708.2 111 C708.2 119 702.5 124 695.5 124 C691 124 687.5 122.5 684.5 119.5 L674.3 109.5 C672 107.2 672.5 104.5 674.5 103.5 C676.5 102.5 678.3 103.2 680 104.7 L683.9 108"/>
  <!-- zoom out / in -->
  <circle cx="783" cy="100" r="15.8"/>
  <path d="M794.5 111.5 L805 122 M776 100 L790 100"/>
  <circle cx="876.7" cy="100" r="15.8"/>
  <path d="M888.2 111.5 L898.7 122 M869.7 100 L883.7 100 M876.7 93 L876.7 107"/>
  <!-- columns -->
  <rect x="954.3" y="91.3" width="41.5" height="25.5" rx="3"/>
  <path d="M966.3 92 L966.3 116 M983.8 92 L983.8 116"/>
  <!-- pen -->
  <path d="M1467 122 L1467 116 C1467 111 1468.5 109 1471 106 L1473.5 103 C1475 101 1475.2 99.5 1475.2 97 L1475.2 94 L1483 94 L1483 97 C1483 99.5 1483.3 101 1485 103 L1487.5 106 C1490 109 1491 111 1491 116 L1491 122 M1479 88 L1479 94"/>
  <!-- signature -->
  <path d="M1593.2 112.9 L1635.6 112.9 M1595 101.3 L1601 106.3 M1601 101.3 L1595 106.3"/>
  <path d="M1593.8 95 C1600 90 1610 85 1614.5 84 C1617 83.5 1619 86 1618.5 90 C1618 97 1617.5 106 1615.7 114 C1614 120 1611 123.5 1608.4 123.5 C1606 123.5 1605.3 119 1605.5 115 C1605.8 109 1609 104 1613 101 C1616 98.5 1619 96.5 1622 95 C1624.5 93.5 1625.5 94 1626 96 C1626.5 99 1627 102 1628 102.5 C1630 102 1632.5 94 1634 88.4"/>
  <!-- image -->
  <rect x="1684.5" y="89.4" width="40.8" height="28.9" rx="3"/>
  <circle cx="1694" cy="96.9" r="2.4" fill="#3b3e45" stroke="none"/>
  <polyline points="1685.5,117 1694,107 1699.8,113.2 1712.9,100.1 1725,112"/>
  <!-- comment -->
  <path d="M1826.5 87.8 L1853.4 87.8 A4.2 4.2 0 0 1 1857.6 92 L1857.6 111.4 A4.2 4.2 0 0 1 1853.4 115.6 L1845.7 115.6 L1840.2 121.4 L1834.8 115.6 L1826.5 115.6 A4.2 4.2 0 0 1 1822.3 111.4 L1822.3 92 A4.2 4.2 0 0 1 1826.5 87.8 Z"/>
  <path d="M1831 98 L1848.8 98 M1831 105.8 L1848.8 105.8"/>
  <!-- T| -->
  <path d="M1917 94 L1937.5 94 M1927.2 94 L1927.2 115.5 M1945 86 L1945 122"/>
  <!-- line -->
  <path d="M2043 123 L2082.5 84.5"/>
  <!-- printer -->
  <path d="M2186.3 92 L2186.3 88 A3 3 0 0 1 2189.3 85 L2206.9 85 A3 3 0 0 1 2209.9 88 L2209.9 92"/>
  <path d="M2186.3 115.8 L2180.5 115.8 A4.5 4.5 0 0 1 2176 111.3 L2176 96.4 A4.5 4.5 0 0 1 2180.5 91.9 L2215.5 91.9 A4.5 4.5 0 0 1 2220 96.4 L2220 111.3 A4.5 4.5 0 0 1 2215.5 115.8 L2209.9 115.8"/>
  <rect x="2186.3" y="104.2" width="23.6" height="22" rx="3"/>
  <path d="M2194.3 111.8 L2201.8 111.8 M2194.3 117.8 L2201.8 117.8"/>
  <circle cx="2206.9" cy="97.9" r="1.9" fill="#3b3e45" stroke="none"/>
  <!-- edit doc -->
  <path d="M2276.5 117.5 L2274.5 117.5 A2.5 2.5 0 0 1 2272 115 L2272 86 A3 3 0 0 1 2275 83 L2290 83 L2299 92.5 L2299 94"/>
  <path d="M2289.5 83.5 L2289.5 89.5 A2.5 2.5 0 0 0 2292 92 L2298.5 92.5 Z" fill="#3b3e45"/>
  <g transform="translate(2296,110.7) rotate(-45)">
    <path d="M-15.5 -4 L14.5 -4 A4 4 0 0 1 14.5 4 L-15.5 4 L-19.5 0 Z" transform="translate(0,0)"/>
    <path d="M9 -4 L9 4"/>
  </g>
  <!-- search -->
  <circle cx="2421" cy="100.9" r="14"/>
  <path d="M2432.5 112.3 L2442.2 122"/>
  <!-- download -->
  <path d="M2518 86 L2518 116 M2509.5 107.7 L2518 116.3 L2526.5 107.7 M2500.5 113.7 L2500.5 119.5 A4 4 0 0 0 2504.5 123.5 L2531.5 123.5 A4 4 0 0 0 2535.5 119.5 L2535.5 113.7"/>
</svg>
</div>
</body></html>
